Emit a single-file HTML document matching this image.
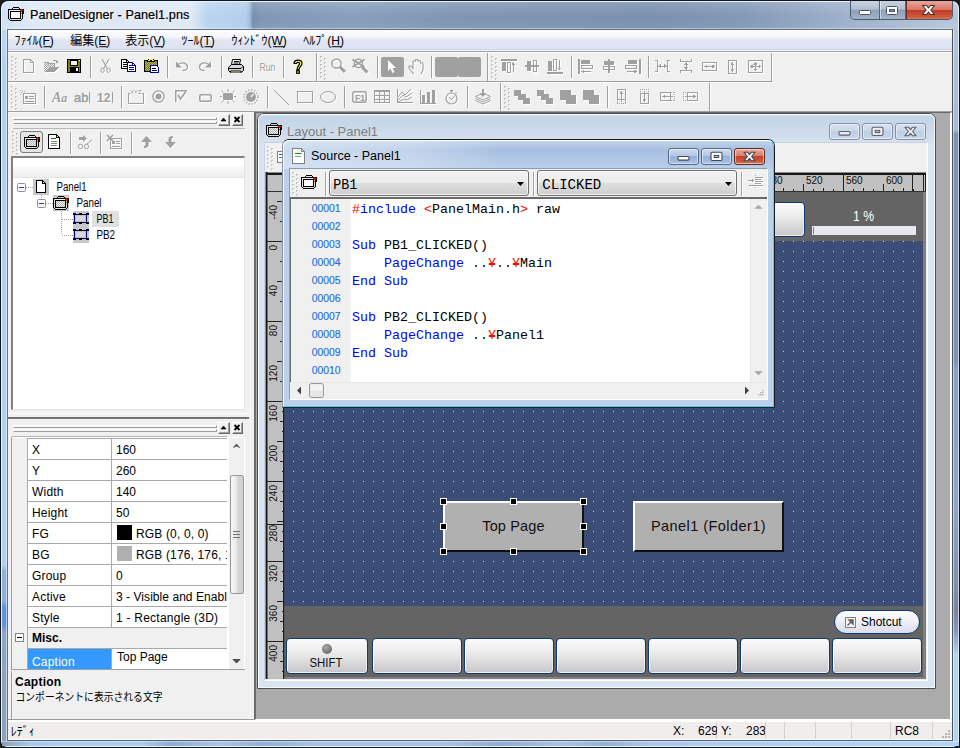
<!DOCTYPE html>
<html><head><meta charset="utf-8"><title>PanelDesigner - Panel1.pns</title>
<style>
*{margin:0;padding:0;box-sizing:border-box}
html,body{width:960px;height:748px;overflow:hidden;background:#1c1c1c}
body{position:relative;font-family:"Liberation Sans",sans-serif;font-size:12px;color:#000}
div,svg,span.a{position:absolute}
svg{overflow:visible}
.t{white-space:nowrap;line-height:1}
.ce{shape-rendering:crispEdges}
</style></head>
<body>
<div style="left:0px;top:0px;width:960px;height:748px;border-radius:7px 7px 7px 7px;background:#10161e;"></div>
<div style="left:1px;top:1px;width:958px;height:746px;border-radius:7px 7px 6px 6px;background:#eaf4fe;"></div>
<div style="left:2px;top:30px;width:5px;height:716px;background:linear-gradient(180deg,#bcd8f6 0,#aed1f4 40px,#aed1f4 535px,#8fb2d9 541px,#8fb2d9 570px,#5e92da 578px,#5e92da 594px,#8aa6c8 602px,#8c9fb8 716px);"></div>
<div style="left:6px;top:30px;width:1px;height:712px;background:rgba(255,255,255,.55);"></div>
<div style="left:953px;top:30px;width:6px;height:716px;background:linear-gradient(180deg,#b4c4d9 0,#a6b9d2 100px,#7b93b0 104px,#7b93b0 330px,#8aa2c2 340px,#8ea6c6 470px,#7d8fab 560px,#7a819d 580px,#8296b8 600px,#b1d3f8 625px,#b1d3f8 716px);"></div>
<div style="left:953px;top:30px;width:1px;height:712px;background:rgba(255,255,255,.5);"></div>
<div style="left:958px;top:30px;width:1px;height:712px;background:rgba(255,255,255,.65);"></div>
<div style="left:2px;top:741px;width:956px;height:5px;background:linear-gradient(90deg,#8c9fb8 0,#a9cbf0 30px,#aacdf2 140px,#8daacf 170px,#a6c7ec 215px,#93b0d6 260px,#a5c5e8 320px,#a5c5e8 440px,#8fadd3 500px,#a5c5e8 560px,#93b1d6 605px,#a9caee 650px,#b1d3f8 900px,#b1d3f8 958px);border-radius:0 0 5px 5px;border-top:1px solid rgba(255,255,255,.45);"></div>
<div style="left:2px;top:2px;width:956px;height:28px;border-radius:6px 6px 0 0;background:linear-gradient(90deg,#cfe0f4 0px,#dde8f5 28px,#dde8f5 190px,#bad4ef 205px,#b1ceec 244px,#9fb9d8 248px,#748cae 251px,#7f96b5 258px,#889ebc 350px,#7f95b3 450px,#7a90af 650px,#8298b6 740px,#9fb2cb 850px,#b6c6da 950px);"></div>
<div style="left:2px;top:2px;width:956px;height:28px;border-radius:6px 6px 0 0;background:linear-gradient(180deg,rgba(255,255,255,.16) 0,rgba(255,255,255,.03) 40%,rgba(255,255,255,0) 60%,rgba(255,255,255,.06) 100%);"></div>
<div style="left:7px;top:29px;width:946px;height:712px;border:1px solid #5f6f84;border-right-color:#475560;border-bottom-color:#4f5f72;"></div>
<div style="left:8px;top:28px;width:944px;height:1px;background:rgba(255,255,255,.4);"></div>
<div style="left:8px;top:30px;width:944px;height:710px;background:#f0f0f0;"></div>
<svg style="left:8px;top:7px" width="18" height="18" viewBox="0 0 18 18" ><g transform="translate(0,0)" shape-rendering="crispEdges" ><rect x="5" y="0" width="6" height="1" fill="#000"/><rect x="4" y="1" width="1" height="2" fill="#000"/><rect x="11" y="1" width="1" height="2" fill="#000"/><rect x="0" y="2" width="16" height="1" fill="#000"/><rect x="0" y="3" width="1" height="9" fill="#000"/><rect x="15" y="3" width="1" height="4" fill="#000"/><rect x="14" y="3" width="1" height="9" fill="#000"/><rect x="1" y="12" width="1" height="1" fill="#000"/><rect x="13" y="12" width="1" height="1" fill="#000"/><rect x="2" y="13" width="11" height="1" fill="#000"/><rect x="1" y="3" width="13" height="9" fill="#e0e0e0"/><rect x="2" y="12" width="11" height="1" fill="#e0e0e0"/><rect x="2" y="3" width="10" height="1" fill="#f4f4f4"/><rect x="2" y="4" width="11" height="1" fill="#000"/><rect x="2" y="11" width="11" height="1" fill="#000"/><rect x="2" y="4" width="1" height="8" fill="#000"/><rect x="12" y="4" width="1" height="8" fill="#000"/><rect x="3" y="5" width="9" height="6" fill="#fff"/><rect x="13" y="2" width="1" height="3" fill="#ff0000"/><rect x="12" y="3" width="3" height="1" fill="#ff0000"/><rect x="13" y="5" width="1" height="1" fill="#e8e800"/><rect x="13" y="6" width="1" height="1" fill="#00d000"/></g></svg>
<div class="t" style="left:30px;top:9px;font-size:12.6px;letter-spacing:0.1px;-webkit-text-stroke:0.2px #000;text-shadow:0 0 6px #fff,0 0 9px #fff;">PanelDesigner - Panel1.pns</div>
<div style="left:850px;top:1px;width:103px;height:19px;border-radius:0 0 5px 5px;border:1px solid #4d5b70;border-top:none;background:linear-gradient(180deg,#c9d3e0 0,#b3c0d2 45%,#8d9fb8 50%,#a3b3c8 100%);overflow:hidden"><div style="left:28px;top:0px;width:1px;height:19px;background:#56647a;"></div><div style="left:29px;top:0px;width:1px;height:19px;background:rgba(255,255,255,.5)"></div><div style="left:54px;top:0px;width:1px;height:19px;background:#56647a;"></div><div style="left:55px;top:0px;width:1px;height:19px;background:rgba(255,255,255,.5)"></div><div style="left:55px;top:0px;width:48px;height:19px;background:linear-gradient(180deg,#e8a596 0,#d9786a 45%,#c33c26 50%,#cf5a3e 85%,#dd8a66 100%);border-left:1px solid #6b2a24"></div></div>
<svg style="left:850px;top:1px" width="103" height="19" viewBox="0 0 103 19" ><rect x="9.5" y="9.5" width="11" height="4" rx="1" fill="#fff" stroke="#4a5568"/><rect x="36.5" y="5.5" width="11" height="8" rx="1" fill="#fff" stroke="#4a5568"/><rect x="39.5" y="8.5" width="5" height="2" fill="#8a98ae" stroke="#4a5568"/><path d="M72.5 4.5H76.5L78.5 6.8L80.5 4.5H84.5L80.8 9L84.5 13.5H80.5L78.5 11.2L76.5 13.5H72.5L76.2 9Z" fill="#fff" stroke="#4a2a2a" stroke-width="1.1" stroke-linejoin="round"/></svg>
<div style="left:8px;top:30px;width:944px;height:20px;background:linear-gradient(180deg,#fdfdfe 0,#f3f5fa 35%,#e3e7f4 50%,#dde2f2 85%,#e6e9f5 100%);"></div>
<div style="left:8px;top:49px;width:944px;height:1px;background:#cfd5e6;"></div>
<div style="left:8px;top:50px;width:944px;height:1px;background:#f4f4f6;"></div>
<div style="left:8px;top:51px;width:944px;height:1px;background:#a0a0a0;"></div>
<div style="left:8px;top:52px;width:944px;height:1px;background:#fff;"></div>
<svg style="left:14px;top:32px" width="44" height="18" viewBox="0 -13 44 18"><text x="0.5" y="0" font-family="'Liberation Sans','Noto Sans CJK JP',sans-serif" font-size="12" fill="#000">ﾌｧｲﾙ(F)</text><rect x="29.5" y="1.2" width="7.2" height="1" fill="#000"/></svg>
<svg style="left:70px;top:32px" width="44" height="18" viewBox="0 -13 44 18"><text x="0.3" y="0" font-family="'Liberation Sans','Noto Sans CJK JP',sans-serif" font-size="12" fill="#000">編集(E)</text><rect x="29.3" y="1.2" width="7.5" height="1" fill="#000"/></svg>
<svg style="left:125px;top:32px" width="44" height="18" viewBox="0 -13 44 18"><text x="0.3" y="0" font-family="'Liberation Sans','Noto Sans CJK JP',sans-serif" font-size="12" fill="#000">表示(V)</text><rect x="29.3" y="1.2" width="8.0" height="1" fill="#000"/></svg>
<svg style="left:181px;top:32px" width="38" height="18" viewBox="0 -13 38 18"><text x="0.5" y="0" font-family="'Liberation Sans','Noto Sans CJK JP',sans-serif" font-size="12" fill="#000">ﾂｰﾙ(T)</text><rect x="23.5" y="1.2" width="7.7" height="1" fill="#000"/></svg>
<svg style="left:231px;top:32px" width="60" height="18" viewBox="0 -13 60 18"><text x="0.5" y="0" font-family="'Liberation Sans','Noto Sans CJK JP',sans-serif" font-size="12" fill="#000">ｳｨﾝﾄﾞｳ(W)</text><rect x="42.1" y="1.2" width="11.7" height="1" fill="#000"/></svg>
<svg style="left:303px;top:32px" width="45" height="18" viewBox="0 -13 45 18"><text x="0.3" y="0" font-family="'Liberation Sans','Noto Sans CJK JP',sans-serif" font-size="12" fill="#000">ﾍﾙﾌﾟ(H)</text><rect x="28.7" y="1.2" width="9.2" height="1" fill="#000"/></svg>
<div style="left:8px;top:81px;width:764px;height:1px;background:#a0a0a0;"></div>
<div style="left:8px;top:82px;width:764px;height:1px;background:#fff;"></div>
<div style="left:8px;top:111px;width:944px;height:1px;background:#a0a0a0;"></div>
<svg style="left:0;top:0" width="960" height="120" viewBox="0 0 960 120"><g shape-rendering="crispEdges"><rect x="11" y="56" width="2" height="2" fill="#c2c2c2"/><rect x="12" y="57" width="1" height="1" fill="#fff"/><rect x="15" y="58" width="2" height="2" fill="#c2c2c2"/><rect x="16" y="59" width="1" height="1" fill="#fff"/><rect x="11" y="60" width="2" height="2" fill="#c2c2c2"/><rect x="12" y="61" width="1" height="1" fill="#fff"/><rect x="15" y="62" width="2" height="2" fill="#c2c2c2"/><rect x="16" y="63" width="1" height="1" fill="#fff"/><rect x="11" y="64" width="2" height="2" fill="#c2c2c2"/><rect x="12" y="65" width="1" height="1" fill="#fff"/><rect x="15" y="66" width="2" height="2" fill="#c2c2c2"/><rect x="16" y="67" width="1" height="1" fill="#fff"/><rect x="11" y="68" width="2" height="2" fill="#c2c2c2"/><rect x="12" y="69" width="1" height="1" fill="#fff"/><rect x="15" y="70" width="2" height="2" fill="#c2c2c2"/><rect x="16" y="71" width="1" height="1" fill="#fff"/><rect x="11" y="72" width="2" height="2" fill="#c2c2c2"/><rect x="12" y="73" width="1" height="1" fill="#fff"/><rect x="15" y="74" width="2" height="2" fill="#c2c2c2"/><rect x="16" y="75" width="1" height="1" fill="#fff"/><rect x="11" y="76" width="2" height="2" fill="#c2c2c2"/><rect x="12" y="77" width="1" height="1" fill="#fff"/><rect x="15" y="78" width="2" height="2" fill="#c2c2c2"/><rect x="16" y="79" width="1" height="1" fill="#fff"/></g><g transform="translate(23,59)" shape-rendering="crispEdges" ><g transform="translate(1,1)" fill="#ffffff" stroke="#ffffff"><path d="M0.5 0.5H7.5L10.5 3.5V13.5H0.5Z" fill="none" stroke-width="1"/><path d="M7.5 0.5V3.5H10.5" fill="none" stroke-width="1"/></g><g fill="#a0a0a0" stroke="#a0a0a0"><path d="M0.5 0.5H7.5L10.5 3.5V13.5H0.5Z" fill="none" stroke-width="1"/><path d="M7.5 0.5V3.5H10.5" fill="none" stroke-width="1"/></g></g><g transform="translate(44,59)" shape-rendering="crispEdges" ><g transform="translate(1,1)"><path d="M0 13H11L15 8H5Z" fill="#ffffff" stroke="none"/></g><pattern id="p1" width="2" height="2" patternUnits="userSpaceOnUse"><rect width="2" height="2" fill="#a0a0a0"/><rect width="1" height="1" fill="#f0f0f0"/><rect x="1" y="1" width="1" height="1" fill="#f0f0f0"/></pattern><rect x="0" y="4" width="10" height="9" fill="url(#p1)"/><path d="M0 13H11L15 8H5Z" fill="#a0a0a0"/><path d="M0 4V3H4V4H10V8" fill="none" stroke="#a0a0a0"/><path d="M8.5 2.5C10 0.5 12.5 0.5 13.5 3.5M13.5 3.5V1.5M13.5 3.5H11.5" fill="none" stroke="#a0a0a0"/></g><g transform="translate(67,59)" shape-rendering="crispEdges" ><rect x="0" y="0" width="14" height="14" fill="#000"/><rect x="1" y="1" width="12" height="12" fill="#808000"/><rect x="3" y="1" width="8" height="6" fill="#fff"/><rect x="3" y="1" width="8" height="1" fill="#000"/><rect x="3" y="1" width="1" height="6" fill="#000"/><rect x="10" y="1" width="1" height="6" fill="#000"/><rect x="3" y="6" width="8" height="1" fill="#000"/><rect x="4" y="2" width="6" height="4" fill="#f0f0f0"/><rect x="3" y="8" width="9" height="5" fill="#000"/><rect x="9" y="9" width="2" height="3" fill="#fff"/><rect x="12" y="1" width="1" height="1" fill="#fff"/></g><g shape-rendering="crispEdges"><rect x="90" y="56" width="1" height="22" fill="#a0a0a0"/><rect x="91" y="56" width="1" height="22" fill="#ffffff"/></g><g transform="translate(100.5,59)"><g transform="translate(1,1)" fill="#ffffff" stroke="#ffffff"><path d="M1.5 0L6.8 9.5M8.5 0L3.2 9.5" fill="none" stroke-width="1.1"/><ellipse cx="2" cy="11.3" rx="1.7" ry="2.2" fill="none"/><ellipse cx="8" cy="11.3" rx="1.7" ry="2.2" fill="none"/></g><g fill="#a0a0a0" stroke="#a0a0a0"><path d="M1.5 0L6.8 9.5M8.5 0L3.2 9.5" fill="none" stroke-width="1.1"/><ellipse cx="2" cy="11.3" rx="1.7" ry="2.2" fill="none"/><ellipse cx="8" cy="11.3" rx="1.7" ry="2.2" fill="none"/></g></g><g transform="translate(121,59)" shape-rendering="crispEdges" ><path d="M0.5 0.5H5.5L8.5 3.5V9.5H0.5Z" fill="#fff" stroke="#000"/><path d="M5.5 0.5V3.5H8.5" fill="none" stroke="#000"/><rect x="2" y="3" width="3" height="1" fill="#000"/><rect x="2" y="5" width="5" height="1" fill="#000"/><rect x="2" y="7" width="5" height="1" fill="#000"/><path d="M6.5 3.5H11.5L14.5 6.5V12.5H6.5Z" fill="#fff" stroke="#000080"/><path d="M11.5 3.5V6.5H14.5" fill="none" stroke="#000080"/><rect x="8" y="6" width="3" height="1" fill="#000080"/><rect x="8" y="8" width="5" height="1" fill="#000080"/><rect x="8" y="10" width="5" height="1" fill="#000080"/></g><g transform="translate(144,59)" shape-rendering="crispEdges" ><rect x="0" y="1" width="14" height="12" fill="#000"/><pattern id="p2" width="2" height="2" patternUnits="userSpaceOnUse"><rect width="2" height="2" fill="#b0b070"/><rect width="1" height="1" fill="#808000"/><rect x="1" y="1" width="1" height="1" fill="#808000"/></pattern><rect x="1" y="2" width="12" height="10" fill="url(#p2)"/><rect x="4" y="0" width="6" height="1" fill="#000"/><rect x="3" y="1" width="8" height="2" fill="#000"/><rect x="5" y="0" width="4" height="1" fill="#ffff00"/><rect x="4" y="1" width="6" height="1" fill="#ffff00"/><rect x="6" y="1" width="2" height="1" fill="#000"/><path d="M6.5 6.5H12.5L14.5 8.5V13.5H6.5Z" fill="#fff" stroke="#000080"/><rect x="8" y="9" width="4" height="1" fill="#000080"/><rect x="8" y="11" width="5" height="1" fill="#000080"/></g><g shape-rendering="crispEdges"><rect x="167" y="56" width="1" height="22" fill="#a0a0a0"/><rect x="168" y="56" width="1" height="22" fill="#ffffff"/></g><g transform="translate(176,60)"><g transform="translate(1,1)" fill="#ffffff" stroke="#ffffff"><path d="M2 4.5C6 1.5 11.5 3 11.5 7C11.5 10 8 10.5 6.5 10.5" fill="none" stroke-width="1.3"/><path d="M0 1.5L0 7.5L6 7.5Z" stroke="none"/></g><g fill="#a0a0a0" stroke="#a0a0a0"><path d="M2 4.5C6 1.5 11.5 3 11.5 7C11.5 10 8 10.5 6.5 10.5" fill="none" stroke-width="1.3"/><path d="M0 1.5L0 7.5L6 7.5Z" stroke="none"/></g></g><g transform="translate(199,60)"><g transform="translate(1,1)" fill="#ffffff" stroke="#ffffff"><path d="M10 4.5C6 1.5 0.5 3 0.5 7C0.5 10 4 10.5 5.5 10.5" fill="none" stroke-width="1.3"/><path d="M12 1.5L12 7.5L6 7.5Z" stroke="none"/></g><g fill="#a0a0a0" stroke="#a0a0a0"><path d="M10 4.5C6 1.5 0.5 3 0.5 7C0.5 10 4 10.5 5.5 10.5" fill="none" stroke-width="1.3"/><path d="M12 1.5L12 7.5L6 7.5Z" stroke="none"/></g></g><g shape-rendering="crispEdges"><rect x="221" y="56" width="1" height="22" fill="#a0a0a0"/><rect x="222" y="56" width="1" height="22" fill="#ffffff"/></g><g transform="translate(228,59)"><path d="M4.5 0.5H12.5L11.5 5.5H3.5Z" fill="#fff" stroke="#000"/><path d="M6 2.5H11M5.5 4H10.5" stroke="#000" fill="none"/><path d="M0.5 8.5L3.5 5.5H13.5L15.5 7.5V11.5L13 13.5H2.5L0.5 11.5Z" fill="#d8d8d8" stroke="#000"/><path d="M1 9.5H13L15 7.5" stroke="#000" fill="none"/><rect x="7" y="10" width="3" height="1" fill="#e8e000"/><path d="M2.5 13.5V12H13V13.5" stroke="#000" fill="#fff"/></g><g shape-rendering="crispEdges"><rect x="252" y="56" width="1" height="22" fill="#a0a0a0"/><rect x="253" y="56" width="1" height="22" fill="#ffffff"/></g><g shape-rendering="crispEdges"><rect x="283" y="56" width="1" height="22" fill="#a0a0a0"/><rect x="284" y="56" width="1" height="22" fill="#ffffff"/></g><g transform="translate(293,59.5)"><path d="M1 4C1 -0.5 9 -0.5 9 4C9 7 6 7 6 10H4C4 6.5 6.5 6 6.5 4C6.5 2.5 3.5 2.5 3.5 4Z" fill="#ffff00" stroke="#000" stroke-width="1.2" stroke-linejoin="round"/><rect x="3.7" y="11.2" width="2.6" height="2.6" fill="#ffff00" stroke="#000" stroke-width="1.2"/></g><g shape-rendering="crispEdges"><rect x="316" y="53" width="1" height="28" fill="#a0a0a0"/><rect x="317" y="53" width="1" height="28" fill="#ffffff"/></g><g shape-rendering="crispEdges"><rect x="320" y="56" width="2" height="2" fill="#c2c2c2"/><rect x="321" y="57" width="1" height="1" fill="#fff"/><rect x="324" y="58" width="2" height="2" fill="#c2c2c2"/><rect x="325" y="59" width="1" height="1" fill="#fff"/><rect x="320" y="60" width="2" height="2" fill="#c2c2c2"/><rect x="321" y="61" width="1" height="1" fill="#fff"/><rect x="324" y="62" width="2" height="2" fill="#c2c2c2"/><rect x="325" y="63" width="1" height="1" fill="#fff"/><rect x="320" y="64" width="2" height="2" fill="#c2c2c2"/><rect x="321" y="65" width="1" height="1" fill="#fff"/><rect x="324" y="66" width="2" height="2" fill="#c2c2c2"/><rect x="325" y="67" width="1" height="1" fill="#fff"/><rect x="320" y="68" width="2" height="2" fill="#c2c2c2"/><rect x="321" y="69" width="1" height="1" fill="#fff"/><rect x="324" y="70" width="2" height="2" fill="#c2c2c2"/><rect x="325" y="71" width="1" height="1" fill="#fff"/><rect x="320" y="72" width="2" height="2" fill="#c2c2c2"/><rect x="321" y="73" width="1" height="1" fill="#fff"/><rect x="324" y="74" width="2" height="2" fill="#c2c2c2"/><rect x="325" y="75" width="1" height="1" fill="#fff"/><rect x="320" y="76" width="2" height="2" fill="#c2c2c2"/><rect x="321" y="77" width="1" height="1" fill="#fff"/><rect x="324" y="78" width="2" height="2" fill="#c2c2c2"/><rect x="325" y="79" width="1" height="1" fill="#fff"/></g><g transform="translate(331,58)"><g transform="translate(1,1)" fill="none" stroke="#ffffff"><circle cx="5.5" cy="5.5" r="4.6" fill="none" stroke-width="1.5"/><path d="M9 9L14 14" fill="none" stroke-width="3"/></g><g fill="none" stroke="#a0a0a0"><circle cx="5.5" cy="5.5" r="4.6" fill="none" stroke-width="1.5"/><path d="M9 9L14 14" fill="none" stroke-width="3"/></g></g><g transform="translate(352,58)"><g transform="translate(1,1)" fill="none" stroke="#ffffff"><circle cx="6.5" cy="5.5" r="4.2" fill="none" stroke-width="1.5"/><path d="M10 9L15.5 14.5" fill="none" stroke-width="3"/><path d="M0.5 1.5L12.5 9M12.5 1.5L0.5 9" fill="none" stroke-width="2"/></g><g fill="none" stroke="#a0a0a0"><circle cx="6.5" cy="5.5" r="4.2" fill="none" stroke-width="1.5"/><path d="M10 9L15.5 14.5" fill="none" stroke-width="3"/><path d="M0.5 1.5L12.5 9M12.5 1.5L0.5 9" fill="none" stroke-width="2"/></g></g><g shape-rendering="crispEdges"><rect x="377" y="56" width="1" height="22" fill="#a0a0a0"/><rect x="378" y="56" width="1" height="22" fill="#ffffff"/></g><rect x="381" y="57" width="23" height="20" rx="2" fill="#a0a0a0"/><g transform="translate(388,60)"><path d="M0 0V11L2.5 8.5L4.5 13L6.5 12L4.5 8H8Z" fill="#fff"/></g><g transform="translate(408,59)"><g transform="translate(1,1)" fill="none" stroke="#ffffff"><g transform="scale(1.25,1.1)"><path d="M4.5 13.5C2 10 0.5 8 0.5 7C1.5 5.5 3 7 4 8.5V2.5C4 1 6 1 6 2.5V1.5C6 0 8 0 8 1.5V2.5C8 1 10 1 10 2.5V4C10 3 12 3 12 4.5V9C12 11 11 12 10.5 13.5" fill="none" stroke-width="0.9"/></g></g><g fill="none" stroke="#a0a0a0"><g transform="scale(1.25,1.1)"><path d="M4.5 13.5C2 10 0.5 8 0.5 7C1.5 5.5 3 7 4 8.5V2.5C4 1 6 1 6 2.5V1.5C6 0 8 0 8 1.5V2.5C8 1 10 1 10 2.5V4C10 3 12 3 12 4.5V9C12 11 11 12 10.5 13.5" fill="none" stroke-width="0.9"/></g></g></g><g shape-rendering="crispEdges"><rect x="431" y="56" width="1" height="22" fill="#a0a0a0"/><rect x="432" y="56" width="1" height="22" fill="#ffffff"/></g><rect x="435" y="57" width="23" height="20" rx="2" fill="#a0a0a0"/><rect x="458" y="57" width="23" height="20" rx="2" fill="#a0a0a0"/><g shape-rendering="crispEdges"><rect x="487" y="53" width="1" height="28" fill="#a0a0a0"/><rect x="488" y="53" width="1" height="28" fill="#ffffff"/></g><g shape-rendering="crispEdges"><rect x="491" y="56" width="2" height="2" fill="#c2c2c2"/><rect x="492" y="57" width="1" height="1" fill="#fff"/><rect x="495" y="58" width="2" height="2" fill="#c2c2c2"/><rect x="496" y="59" width="1" height="1" fill="#fff"/><rect x="491" y="60" width="2" height="2" fill="#c2c2c2"/><rect x="492" y="61" width="1" height="1" fill="#fff"/><rect x="495" y="62" width="2" height="2" fill="#c2c2c2"/><rect x="496" y="63" width="1" height="1" fill="#fff"/><rect x="491" y="64" width="2" height="2" fill="#c2c2c2"/><rect x="492" y="65" width="1" height="1" fill="#fff"/><rect x="495" y="66" width="2" height="2" fill="#c2c2c2"/><rect x="496" y="67" width="1" height="1" fill="#fff"/><rect x="491" y="68" width="2" height="2" fill="#c2c2c2"/><rect x="492" y="69" width="1" height="1" fill="#fff"/><rect x="495" y="70" width="2" height="2" fill="#c2c2c2"/><rect x="496" y="71" width="1" height="1" fill="#fff"/><rect x="491" y="72" width="2" height="2" fill="#c2c2c2"/><rect x="492" y="73" width="1" height="1" fill="#fff"/><rect x="495" y="74" width="2" height="2" fill="#c2c2c2"/><rect x="496" y="75" width="1" height="1" fill="#fff"/><rect x="491" y="76" width="2" height="2" fill="#c2c2c2"/><rect x="492" y="77" width="1" height="1" fill="#fff"/><rect x="495" y="78" width="2" height="2" fill="#c2c2c2"/><rect x="496" y="79" width="1" height="1" fill="#fff"/></g><g transform="translate(501,59)" shape-rendering="crispEdges" ><g transform="translate(1,1)" fill="#ffffff" stroke="#ffffff"><rect x="0" y="0" width="16" height="2" stroke="none"/><rect x="1" y="3" width="4" height="9" stroke="none"/><rect x="6.5" y="3.5" width="3" height="10" fill="none"/><path d="M12.5 4L12.5 13" fill="none" stroke-width="1"/><path d="M10.5 6L12.5 3L14.5 6Z" stroke="none"/></g><g fill="#a0a0a0" stroke="#a0a0a0"><rect x="0" y="0" width="16" height="2" stroke="none"/><rect x="1" y="3" width="4" height="9" stroke="none"/><rect x="6.5" y="3.5" width="3" height="10" fill="none"/><path d="M12.5 4L12.5 13" fill="none" stroke-width="1"/><path d="M10.5 6L12.5 3L14.5 6Z" stroke="none"/></g></g><g transform="translate(525,59)" shape-rendering="crispEdges" ><g transform="translate(1,1)" fill="#ffffff" stroke="#ffffff"><rect x="0" y="6" width="14" height="1.5" stroke="none"/><rect x="2" y="2" width="4" height="10" stroke="none"/><rect x="8.5" y="1.5" width="3" height="11" fill="none"/></g><g fill="#a0a0a0" stroke="#a0a0a0"><rect x="0" y="6" width="14" height="1.5" stroke="none"/><rect x="2" y="2" width="4" height="10" stroke="none"/><rect x="8.5" y="1.5" width="3" height="11" fill="none"/></g></g><g transform="translate(547,59)" shape-rendering="crispEdges" ><g transform="translate(1,1)" fill="#ffffff" stroke="#ffffff"><rect x="0" y="13" width="16" height="2" stroke="none"/><rect x="1" y="2" width="4" height="10" stroke="none"/><rect x="6.5" y="0.5" width="3" height="11" fill="none"/><path d="M12.5 1L12.5 10" fill="none" stroke-width="1"/><path d="M10.5 8.5L12.5 11.5L14.5 8.5Z" stroke="none"/></g><g fill="#a0a0a0" stroke="#a0a0a0"><rect x="0" y="13" width="16" height="2" stroke="none"/><rect x="1" y="2" width="4" height="10" stroke="none"/><rect x="6.5" y="0.5" width="3" height="11" fill="none"/><path d="M12.5 1L12.5 10" fill="none" stroke-width="1"/><path d="M10.5 8.5L12.5 11.5L14.5 8.5Z" stroke="none"/></g></g><g shape-rendering="crispEdges"><rect x="571" y="56" width="1" height="22" fill="#a0a0a0"/><rect x="572" y="56" width="1" height="22" fill="#ffffff"/></g><g transform="translate(578,59)" shape-rendering="crispEdges" ><g transform="translate(1,1)" fill="#ffffff" stroke="#ffffff"><rect x="0" y="0" width="2" height="15" stroke="none"/><rect x="3" y="1" width="9" height="4" stroke="none"/><rect x="3.5" y="6.5" width="11" height="3" fill="none"/><path d="M4 12.5L13 12.5" fill="none" stroke-width="1"/><path d="M6 10.5L3 12.5L6 14.5Z" stroke="none"/></g><g fill="#a0a0a0" stroke="#a0a0a0"><rect x="0" y="0" width="2" height="15" stroke="none"/><rect x="3" y="1" width="9" height="4" stroke="none"/><rect x="3.5" y="6.5" width="11" height="3" fill="none"/><path d="M4 12.5L13 12.5" fill="none" stroke-width="1"/><path d="M6 10.5L3 12.5L6 14.5Z" stroke="none"/></g></g><g transform="translate(603,59)" shape-rendering="crispEdges" ><g transform="translate(1,1)" fill="#ffffff" stroke="#ffffff"><rect x="5.3" y="0" width="1.5" height="14" stroke="none"/><rect x="1" y="2" width="10" height="4" stroke="none"/><rect x="0.5" y="7.5" width="11" height="3" fill="none"/></g><g fill="#a0a0a0" stroke="#a0a0a0"><rect x="5.3" y="0" width="1.5" height="14" stroke="none"/><rect x="1" y="2" width="10" height="4" stroke="none"/><rect x="0.5" y="7.5" width="11" height="3" fill="none"/></g></g><g transform="translate(625,59)" shape-rendering="crispEdges" ><g transform="translate(1,1)" fill="#ffffff" stroke="#ffffff"><rect x="14" y="0" width="2" height="15" stroke="none"/><rect x="3" y="1" width="9" height="4" stroke="none"/><rect x="0.5" y="6.5" width="11" height="3" fill="none"/><path d="M2 12.5L11 12.5" fill="none" stroke-width="1"/><path d="M9 10.5L12 12.5L9 14.5Z" stroke="none"/></g><g fill="#a0a0a0" stroke="#a0a0a0"><rect x="14" y="0" width="2" height="15" stroke="none"/><rect x="3" y="1" width="9" height="4" stroke="none"/><rect x="0.5" y="6.5" width="11" height="3" fill="none"/><path d="M2 12.5L11 12.5" fill="none" stroke-width="1"/><path d="M9 10.5L12 12.5L9 14.5Z" stroke="none"/></g></g><g shape-rendering="crispEdges"><rect x="648" y="56" width="1" height="22" fill="#a0a0a0"/><rect x="649" y="56" width="1" height="22" fill="#ffffff"/></g><g transform="translate(655,60)" shape-rendering="crispEdges" ><g transform="translate(1,1)" fill="#ffffff" stroke="#ffffff"><path d="M0 0.5H2.5V11.5H0" fill="none" stroke-width="1"/><path d="M15 0.5H12.5V11.5H15" fill="none" stroke-width="1"/><path d="M3 6L12 6" fill="none" stroke-width="1"/><path d="M6 4L3 6L6 8Z" stroke="none"/><path d="M9 4L12 6L9 8Z" stroke="none"/></g><g fill="#a0a0a0" stroke="#a0a0a0"><path d="M0 0.5H2.5V11.5H0" fill="none" stroke-width="1"/><path d="M15 0.5H12.5V11.5H15" fill="none" stroke-width="1"/><path d="M3 6L12 6" fill="none" stroke-width="1"/><path d="M6 4L3 6L6 8Z" stroke="none"/><path d="M9 4L12 6L9 8Z" stroke="none"/></g></g><g transform="translate(680,59)" shape-rendering="crispEdges" ><g transform="translate(1,1)" fill="#ffffff" stroke="#ffffff"><path d="M0.5 0V2.5H11.5V0" fill="none" stroke-width="1"/><path d="M0.5 14V11.5H11.5V14" fill="none" stroke-width="1"/><path d="M6 3L6 11" fill="none" stroke-width="1"/><path d="M4 6L6 3L8 6Z" stroke="none"/><path d="M4 8L6 11L8 8Z" stroke="none"/></g><g fill="#a0a0a0" stroke="#a0a0a0"><path d="M0.5 0V2.5H11.5V0" fill="none" stroke-width="1"/><path d="M0.5 14V11.5H11.5V14" fill="none" stroke-width="1"/><path d="M6 3L6 11" fill="none" stroke-width="1"/><path d="M4 6L6 3L8 6Z" stroke="none"/><path d="M4 8L6 11L8 8Z" stroke="none"/></g></g><g transform="translate(702,62)" shape-rendering="crispEdges" ><g transform="translate(1,1)" fill="#ffffff" stroke="#ffffff"><rect x="0.5" y="0.5" width="14" height="8" fill="none"/><path d="M2 4.5L13 4.5" fill="none" stroke-width="1"/><path d="M5 2.5L2 4.5L5 6.5Z" stroke="none"/><path d="M10 2.5L13 4.5L10 6.5Z" stroke="none"/></g><g fill="#a0a0a0" stroke="#a0a0a0"><rect x="0.5" y="0.5" width="14" height="8" fill="none"/><path d="M2 4.5L13 4.5" fill="none" stroke-width="1"/><path d="M5 2.5L2 4.5L5 6.5Z" stroke="none"/><path d="M10 2.5L13 4.5L10 6.5Z" stroke="none"/></g></g><g transform="translate(728,60)" shape-rendering="crispEdges" ><g transform="translate(1,1)" fill="#ffffff" stroke="#ffffff"><rect x="0.5" y="0.5" width="8" height="13" fill="none"/><path d="M4.5 2L4.5 12" fill="none" stroke-width="1"/><path d="M2.5 5L4.5 2L6.5 5Z" stroke="none"/><path d="M2.5 9L4.5 12L6.5 9Z" stroke="none"/></g><g fill="#a0a0a0" stroke="#a0a0a0"><rect x="0.5" y="0.5" width="8" height="13" fill="none"/><path d="M4.5 2L4.5 12" fill="none" stroke-width="1"/><path d="M2.5 5L4.5 2L6.5 5Z" stroke="none"/><path d="M2.5 9L4.5 12L6.5 9Z" stroke="none"/></g></g><g transform="translate(748,60)" shape-rendering="crispEdges" ><g transform="translate(1,1)" fill="#ffffff" stroke="#ffffff"><rect x="0.5" y="0.5" width="14" height="12" fill="none"/><path d="M2 6.5L13 6.5" fill="none" stroke-width="1"/><path d="M7.5 2L7.5 11" fill="none" stroke-width="1"/><path d="M4.5 4.5L2 6.5L4.5 8.5Z" stroke="none"/><path d="M10.5 4.5L13 6.5L10.5 8.5Z" stroke="none"/><path d="M5.5 4.5L7.5 2L9.5 4.5Z" stroke="none"/><path d="M5.5 8.5L7.5 11L9.5 8.5Z" stroke="none"/></g><g fill="#a0a0a0" stroke="#a0a0a0"><rect x="0.5" y="0.5" width="14" height="12" fill="none"/><path d="M2 6.5L13 6.5" fill="none" stroke-width="1"/><path d="M7.5 2L7.5 11" fill="none" stroke-width="1"/><path d="M4.5 4.5L2 6.5L4.5 8.5Z" stroke="none"/><path d="M10.5 4.5L13 6.5L10.5 8.5Z" stroke="none"/><path d="M5.5 4.5L7.5 2L9.5 4.5Z" stroke="none"/><path d="M5.5 8.5L7.5 11L9.5 8.5Z" stroke="none"/></g></g><g shape-rendering="crispEdges"><rect x="771" y="53" width="1" height="28" fill="#a0a0a0"/><rect x="772" y="53" width="1" height="28" fill="#ffffff"/></g><g shape-rendering="crispEdges"><rect x="11" y="86" width="2" height="2" fill="#c2c2c2"/><rect x="12" y="87" width="1" height="1" fill="#fff"/><rect x="15" y="88" width="2" height="2" fill="#c2c2c2"/><rect x="16" y="89" width="1" height="1" fill="#fff"/><rect x="11" y="90" width="2" height="2" fill="#c2c2c2"/><rect x="12" y="91" width="1" height="1" fill="#fff"/><rect x="15" y="92" width="2" height="2" fill="#c2c2c2"/><rect x="16" y="93" width="1" height="1" fill="#fff"/><rect x="11" y="94" width="2" height="2" fill="#c2c2c2"/><rect x="12" y="95" width="1" height="1" fill="#fff"/><rect x="15" y="96" width="2" height="2" fill="#c2c2c2"/><rect x="16" y="97" width="1" height="1" fill="#fff"/><rect x="11" y="98" width="2" height="2" fill="#c2c2c2"/><rect x="12" y="99" width="1" height="1" fill="#fff"/><rect x="15" y="100" width="2" height="2" fill="#c2c2c2"/><rect x="16" y="101" width="1" height="1" fill="#fff"/><rect x="11" y="102" width="2" height="2" fill="#c2c2c2"/><rect x="12" y="103" width="1" height="1" fill="#fff"/><rect x="15" y="104" width="2" height="2" fill="#c2c2c2"/><rect x="16" y="105" width="1" height="1" fill="#fff"/><rect x="11" y="106" width="2" height="2" fill="#c2c2c2"/><rect x="12" y="107" width="1" height="1" fill="#fff"/><rect x="15" y="108" width="2" height="2" fill="#c2c2c2"/><rect x="16" y="109" width="1" height="1" fill="#fff"/></g><g transform="translate(20,90)" shape-rendering="crispEdges" ><g transform="translate(1,1)" fill="#ffffff" stroke="#ffffff"><rect x="3.5" y="3.5" width="12" height="10" fill="none"/><rect x="5" y="6" width="3" height="3" stroke="none"/><path d="M9 6.5L14 6.5" fill="none" stroke-width="1"/><path d="M9 8.5L14 8.5" fill="none" stroke-width="1"/><path d="M5 11.5L14 11.5" fill="none" stroke-width="1"/><rect x="0" y="0" width="1" height="1" stroke="none"/><rect x="2" y="1" width="1" height="1" stroke="none"/><rect x="1" y="2" width="1" height="1" stroke="none"/><rect x="0" y="4" width="1" height="1" stroke="none"/><rect x="4" y="1" width="1" height="1" stroke="none"/></g><g fill="#a0a0a0" stroke="#a0a0a0"><rect x="3.5" y="3.5" width="12" height="10" fill="none"/><rect x="5" y="6" width="3" height="3" stroke="none"/><path d="M9 6.5L14 6.5" fill="none" stroke-width="1"/><path d="M9 8.5L14 8.5" fill="none" stroke-width="1"/><path d="M5 11.5L14 11.5" fill="none" stroke-width="1"/><rect x="0" y="0" width="1" height="1" stroke="none"/><rect x="2" y="1" width="1" height="1" stroke="none"/><rect x="1" y="2" width="1" height="1" stroke="none"/><rect x="0" y="4" width="1" height="1" stroke="none"/><rect x="4" y="1" width="1" height="1" stroke="none"/></g></g><g shape-rendering="crispEdges"><rect x="44" y="86" width="1" height="22" fill="#a0a0a0"/><rect x="45" y="86" width="1" height="22" fill="#ffffff"/></g><g transform="translate(51,90)"><text x="1" y="12" font-family="Liberation Serif" font-style="italic" font-weight="bold" font-size="14" fill="#ffffff" transform="translate(1,1)">A<tspan font-size="12">a</tspan></text><text x="1" y="12" font-family="Liberation Serif" font-style="italic" font-weight="bold" font-size="14" fill="#a0a0a0">A<tspan font-size="12">a</tspan></text></g><g transform="translate(74,90)"><text x="0" y="12" font-family="Liberation Sans" font-size="13" fill="#ffffff" transform="translate(1,1)">ab</text><text x="0" y="12" font-family="Liberation Sans" font-size="13" fill="#a0a0a0" stroke="#a0a0a0" stroke-width=".5">ab</text><rect x="15" y="2" width="1" height="11" fill="#a0a0a0"/></g><g transform="translate(97,90)"><text x="0" y="12" font-family="Liberation Sans" font-size="12" font-weight="bold" fill="#ffffff" transform="translate(1,1)">12</text><text x="0" y="12" font-family="Liberation Sans" font-size="12" font-weight="bold" fill="#a0a0a0">12</text><rect x="15" y="2" width="1" height="11" fill="#a0a0a0"/></g><g shape-rendering="crispEdges"><rect x="121" y="86" width="1" height="22" fill="#a0a0a0"/><rect x="122" y="86" width="1" height="22" fill="#ffffff"/></g><g transform="translate(128,90)"><g transform="translate(1,1)" fill="#ffffff" stroke="#ffffff"><path d="M0.5 3.5V13.5H15.5V3.5" fill="none" stroke-width="1"/><path d="M0 3.5H2M14 3.5H16" fill="none" stroke-width="1"/><path d="M3 0.5L5.5 3.5M5.5 0.5L3 3.5M6.5 0.5L8 2L9.5 0.5M8 2V3.5M10.5 0.5H13L10.5 3.5H13.5" fill="none" stroke-width="0.8"/></g><g fill="#a0a0a0" stroke="#a0a0a0"><path d="M0.5 3.5V13.5H15.5V3.5" fill="none" stroke-width="1"/><path d="M0 3.5H2M14 3.5H16" fill="none" stroke-width="1"/><path d="M3 0.5L5.5 3.5M5.5 0.5L3 3.5M6.5 0.5L8 2L9.5 0.5M8 2V3.5M10.5 0.5H13L10.5 3.5H13.5" fill="none" stroke-width="0.8"/></g></g><g transform="translate(152,90)"><g transform="translate(1,1)" fill="#ffffff" stroke="#ffffff"><circle cx="6.5" cy="6.5" r="5.6" fill="none" stroke-width="1.4"/><circle cx="6.5" cy="6.5" r="3" stroke="none"/></g><g fill="#a0a0a0" stroke="#a0a0a0"><circle cx="6.5" cy="6.5" r="5.6" fill="none" stroke-width="1.4"/><circle cx="6.5" cy="6.5" r="3" stroke="none"/></g></g><g transform="translate(175,90)"><g transform="translate(1,1)" fill="#ffffff" stroke="#ffffff"><path d="M11.5 0.5H0.5V11.5" fill="none" stroke-width="1"/><path d="M0.5 0.5H11.5" fill="none" stroke-width="1"/><path d="M3 5L5.5 9L11 1.5" fill="none" stroke-width="1.6"/><rect x="0" y="0" width="12" height="1.5" stroke="none"/><rect x="0" y="0" width="1.5" height="12" stroke="none"/></g><g fill="#a0a0a0" stroke="#a0a0a0"><path d="M11.5 0.5H0.5V11.5" fill="none" stroke-width="1"/><path d="M0.5 0.5H11.5" fill="none" stroke-width="1"/><path d="M3 5L5.5 9L11 1.5" fill="none" stroke-width="1.6"/><rect x="0" y="0" width="12" height="1.5" stroke="none"/><rect x="0" y="0" width="1.5" height="12" stroke="none"/></g></g><g transform="translate(199,94)"><g transform="translate(1,1)" fill="#ffffff" stroke="#ffffff"><rect x="0.8" y="0.8" width="11.4" height="6.4" rx="1.5" fill="none" stroke-width="1.6"/></g><g fill="#a0a0a0" stroke="#a0a0a0"><rect x="0.8" y="0.8" width="11.4" height="6.4" rx="1.5" fill="none" stroke-width="1.6"/></g></g><g transform="translate(220,89)"><g transform="translate(1,1)" fill="#ffffff" stroke="#ffffff"><rect x="3" y="4" width="10" height="7" rx="1.5" stroke="none"/><path d="M8 0V3M8 12V15M0 7.5H2M14 7.5H16M1.5 1.5L3.5 3.5M14.5 1.5L12.5 3.5M1.5 13.5L3.5 11.5M14.5 13.5L12.5 11.5" fill="none" stroke-width="1"/></g><g fill="#a0a0a0" stroke="#a0a0a0"><rect x="3" y="4" width="10" height="7" rx="1.5" stroke="none"/><path d="M8 0V3M8 12V15M0 7.5H2M14 7.5H16M1.5 1.5L3.5 3.5M14.5 1.5L12.5 3.5M1.5 13.5L3.5 11.5M14.5 13.5L12.5 11.5" fill="none" stroke-width="1"/></g></g><g transform="translate(243,89)"><g transform="translate(1,1)" fill="#ffffff" stroke="#ffffff"><circle cx="8" cy="8" r="5" stroke="none"/><circle cx="8" cy="8" r="7" fill="none" stroke-dasharray="1.2 1.8" stroke-width="1.6"/></g><g fill="#a0a0a0" stroke="#a0a0a0"><circle cx="8" cy="8" r="5" stroke="none"/><circle cx="8" cy="8" r="7" fill="none" stroke-dasharray="1.2 1.8" stroke-width="1.6"/></g><path d="M8 8L10.5 5" stroke="#f0f0f0" stroke-width="1.4" fill="none"/></g><g shape-rendering="crispEdges"><rect x="267" y="86" width="1" height="22" fill="#a0a0a0"/><rect x="268" y="86" width="1" height="22" fill="#ffffff"/></g><g transform="translate(274,90)"><g transform="translate(1,1)" fill="#ffffff" stroke="#ffffff"><path d="M0 0L15 15" fill="none" stroke-width="1"/></g><g fill="#a0a0a0" stroke="#a0a0a0"><path d="M0 0L15 15" fill="none" stroke-width="1"/></g></g><g transform="translate(297,91)" shape-rendering="crispEdges" ><g transform="translate(1,1)" fill="#ffffff" stroke="#ffffff"><rect x="0.5" y="0.5" width="15" height="11" fill="none"/></g><g fill="#a0a0a0" stroke="#a0a0a0"><rect x="0.5" y="0.5" width="15" height="11" fill="none"/></g></g><g transform="translate(320,91)"><g transform="translate(1,1)" fill="#ffffff" stroke="#ffffff"><ellipse cx="8" cy="6" rx="7.5" ry="5.5" fill="none"/></g><g fill="#a0a0a0" stroke="#a0a0a0"><ellipse cx="8" cy="6" rx="7.5" ry="5.5" fill="none"/></g></g><g shape-rendering="crispEdges"><rect x="344" y="86" width="1" height="22" fill="#a0a0a0"/><rect x="345" y="86" width="1" height="22" fill="#ffffff"/></g><g transform="translate(352,91)"><g transform="translate(1,1)" fill="#ffffff" stroke="#ffffff"><rect x="0.8" y="0.8" width="13.4" height="10.4" rx="1.5" fill="none" stroke-width="1.4"/></g><g fill="#a0a0a0" stroke="#a0a0a0"><rect x="0.8" y="0.8" width="13.4" height="10.4" rx="1.5" fill="none" stroke-width="1.4"/></g><text x="3" y="9.5" font-family="Liberation Sans" font-size="8.5" font-weight="bold" fill="#a0a0a0">F1</text></g><g transform="translate(374,90)" shape-rendering="crispEdges" ><g transform="translate(1,1)" fill="#ffffff" stroke="#ffffff"><rect x="0.5" y="0.5" width="15" height="12" fill="none"/><rect x="0" y="0" width="16" height="2" stroke="none"/><path d="M0 5.5L16 5.5" fill="none" stroke-width="1"/><path d="M0 9.5L16 9.5" fill="none" stroke-width="1"/><path d="M5.5 0L5.5 13" fill="none" stroke-width="1"/><path d="M10.5 0L10.5 13" fill="none" stroke-width="1"/></g><g fill="#a0a0a0" stroke="#a0a0a0"><rect x="0.5" y="0.5" width="15" height="12" fill="none"/><rect x="0" y="0" width="16" height="2" stroke="none"/><path d="M0 5.5L16 5.5" fill="none" stroke-width="1"/><path d="M0 9.5L16 9.5" fill="none" stroke-width="1"/><path d="M5.5 0L5.5 13" fill="none" stroke-width="1"/><path d="M10.5 0L10.5 13" fill="none" stroke-width="1"/></g></g><g transform="translate(397,89)"><g transform="translate(1,1)" fill="#ffffff" stroke="#ffffff"><path d="M0.5 0V13.5H16" fill="none" stroke-width="1"/><path d="M1 8L5 3L8 6L14 0" fill="none" stroke-width="1"/><path d="M1 11L6 6L9 8L15 4" fill="none" stroke-width="1"/><path d="M1 13L7 10L10 11L15 8" fill="none" stroke-width="1"/></g><g fill="#a0a0a0" stroke="#a0a0a0"><path d="M0.5 0V13.5H16" fill="none" stroke-width="1"/><path d="M1 8L5 3L8 6L14 0" fill="none" stroke-width="1"/><path d="M1 11L6 6L9 8L15 4" fill="none" stroke-width="1"/><path d="M1 13L7 10L10 11L15 8" fill="none" stroke-width="1"/></g></g><g transform="translate(420,90)" shape-rendering="crispEdges" ><g transform="translate(1,1)" fill="#ffffff" stroke="#ffffff"><path d="M0.5 0V13.5H16" fill="none" stroke-width="1"/><rect x="2" y="5" width="3" height="8" stroke="none"/><rect x="7" y="2" width="3" height="11" stroke="none"/><rect x="12" y="0" width="3" height="13" stroke="none"/></g><g fill="#a0a0a0" stroke="#a0a0a0"><path d="M0.5 0V13.5H16" fill="none" stroke-width="1"/><rect x="2" y="5" width="3" height="8" stroke="none"/><rect x="7" y="2" width="3" height="11" stroke="none"/><rect x="12" y="0" width="3" height="13" stroke="none"/></g></g><g transform="translate(445,90)"><g transform="translate(1,1)" fill="#ffffff" stroke="#ffffff"><circle cx="6.5" cy="8.5" r="5.5" fill="none" stroke-width="1.2"/><path d="M4 7L6.5 9.5L10 5.5" fill="none" stroke-width="1"/><rect x="5" y="0" width="3" height="1.5" stroke="none"/><path d="M6.5 1L6.5 3" fill="none" stroke-width="1"/><path d="M10.5 2L12 3.5" fill="none" stroke-width="1"/></g><g fill="#a0a0a0" stroke="#a0a0a0"><circle cx="6.5" cy="8.5" r="5.5" fill="none" stroke-width="1.2"/><path d="M4 7L6.5 9.5L10 5.5" fill="none" stroke-width="1"/><rect x="5" y="0" width="3" height="1.5" stroke="none"/><path d="M6.5 1L6.5 3" fill="none" stroke-width="1"/><path d="M10.5 2L12 3.5" fill="none" stroke-width="1"/></g></g><g shape-rendering="crispEdges"><rect x="467" y="86" width="1" height="22" fill="#a0a0a0"/><rect x="468" y="86" width="1" height="22" fill="#ffffff"/></g><g transform="translate(475,89)"><g transform="translate(1,1)" fill="#ffffff" stroke="#ffffff"><path d="M0.5 7.5L8 4L15.5 7.5L8 11Z" fill="none" stroke-width="1"/><path d="M0.5 9.5L8 13L15.5 9.5" fill="none" stroke-width="1"/><path d="M0.5 11.5L8 15L15.5 11.5" fill="none" stroke-width="1"/><rect x="7" y="0" width="2" height="5" stroke="none"/><path d="M4.5 4.5H11.5L8 8Z" stroke="none"/></g><g fill="#a0a0a0" stroke="#a0a0a0"><path d="M0.5 7.5L8 4L15.5 7.5L8 11Z" fill="none" stroke-width="1"/><path d="M0.5 9.5L8 13L15.5 9.5" fill="none" stroke-width="1"/><path d="M0.5 11.5L8 15L15.5 11.5" fill="none" stroke-width="1"/><rect x="7" y="0" width="2" height="5" stroke="none"/><path d="M4.5 4.5H11.5L8 8Z" stroke="none"/></g></g><g shape-rendering="crispEdges"><rect x="500" y="83" width="1" height="28" fill="#a0a0a0"/><rect x="501" y="83" width="1" height="28" fill="#ffffff"/></g><g shape-rendering="crispEdges"><rect x="504" y="86" width="2" height="2" fill="#c2c2c2"/><rect x="505" y="87" width="1" height="1" fill="#fff"/><rect x="508" y="88" width="2" height="2" fill="#c2c2c2"/><rect x="509" y="89" width="1" height="1" fill="#fff"/><rect x="504" y="90" width="2" height="2" fill="#c2c2c2"/><rect x="505" y="91" width="1" height="1" fill="#fff"/><rect x="508" y="92" width="2" height="2" fill="#c2c2c2"/><rect x="509" y="93" width="1" height="1" fill="#fff"/><rect x="504" y="94" width="2" height="2" fill="#c2c2c2"/><rect x="505" y="95" width="1" height="1" fill="#fff"/><rect x="508" y="96" width="2" height="2" fill="#c2c2c2"/><rect x="509" y="97" width="1" height="1" fill="#fff"/><rect x="504" y="98" width="2" height="2" fill="#c2c2c2"/><rect x="505" y="99" width="1" height="1" fill="#fff"/><rect x="508" y="100" width="2" height="2" fill="#c2c2c2"/><rect x="509" y="101" width="1" height="1" fill="#fff"/><rect x="504" y="102" width="2" height="2" fill="#c2c2c2"/><rect x="505" y="103" width="1" height="1" fill="#fff"/><rect x="508" y="104" width="2" height="2" fill="#c2c2c2"/><rect x="509" y="105" width="1" height="1" fill="#fff"/><rect x="504" y="106" width="2" height="2" fill="#c2c2c2"/><rect x="505" y="107" width="1" height="1" fill="#fff"/><rect x="508" y="108" width="2" height="2" fill="#c2c2c2"/><rect x="509" y="109" width="1" height="1" fill="#fff"/></g><g transform="translate(514,90)" shape-rendering="crispEdges" ><g transform="translate(1,1)" fill="#ffffff" stroke="#ffffff"><rect x="0" y="0" width="7" height="6" stroke="none"/><rect x="4" y="4" width="8" height="6" stroke="none"/><rect x="9" y="8" width="7" height="6" stroke="none"/></g><g fill="#a0a0a0" stroke="#a0a0a0"><rect x="0" y="0" width="7" height="6" stroke="none"/><rect x="4" y="4" width="8" height="6" stroke="none"/><rect x="9" y="8" width="7" height="6" stroke="none"/></g></g><g transform="translate(537,90)" shape-rendering="crispEdges" ><g transform="translate(1,1)" fill="#ffffff" stroke="#ffffff"><rect x="0" y="0" width="7" height="6" stroke="none"/><rect x="4" y="4" width="8" height="6" stroke="none"/><rect x="9" y="8" width="7" height="6" stroke="none"/></g><g fill="#a0a0a0" stroke="#a0a0a0"><rect x="0" y="0" width="7" height="6" stroke="none"/><rect x="4" y="4" width="8" height="6" stroke="none"/><rect x="9" y="8" width="7" height="6" stroke="none"/></g></g><g transform="translate(560,90)" shape-rendering="crispEdges" ><g transform="translate(1,1)" fill="#ffffff" stroke="#ffffff"><rect x="0" y="0" width="11" height="10" stroke="none"/><rect x="6" y="5" width="10" height="9" stroke="none"/></g><g fill="#a0a0a0" stroke="#a0a0a0"><rect x="0" y="0" width="11" height="10" stroke="none"/><rect x="6" y="5" width="10" height="9" stroke="none"/></g></g><g transform="translate(583,90)" shape-rendering="crispEdges" ><g transform="translate(1,1)" fill="#ffffff" stroke="#ffffff"><rect x="0" y="0" width="11" height="10" stroke="none"/><rect x="6" y="5" width="10" height="9" stroke="none"/></g><g fill="#a0a0a0" stroke="#a0a0a0"><rect x="0" y="0" width="11" height="10" stroke="none"/><rect x="6" y="5" width="10" height="9" stroke="none"/></g></g><g shape-rendering="crispEdges"><rect x="607" y="86" width="1" height="22" fill="#a0a0a0"/><rect x="608" y="86" width="1" height="22" fill="#ffffff"/></g><g transform="translate(617,89)" shape-rendering="crispEdges" ><g transform="translate(1,1)" fill="#ffffff" stroke="#ffffff"><rect x="0.5" y="0.5" width="8" height="10" fill="none"/><path d="M0 14.5H9M0.5 11V15M8.5 11V15" fill="none" stroke-dasharray="1 1"/><path d="M4.5 3L4.5 13" fill="none" stroke-width="1"/><path d="M2.5 5L4.5 2L6.5 5Z" stroke="none"/></g><g fill="#a0a0a0" stroke="#a0a0a0"><rect x="0.5" y="0.5" width="8" height="10" fill="none"/><path d="M0 14.5H9M0.5 11V15M8.5 11V15" fill="none" stroke-dasharray="1 1"/><path d="M4.5 3L4.5 13" fill="none" stroke-width="1"/><path d="M2.5 5L4.5 2L6.5 5Z" stroke="none"/></g></g><g transform="translate(640,89)" shape-rendering="crispEdges" ><g transform="translate(1,1)" fill="#ffffff" stroke="#ffffff"><rect x="0.5" y="4.5" width="8" height="10" fill="none"/><path d="M0 0.5H9M0.5 0V4M8.5 0V4" fill="none" stroke-dasharray="1 1"/><path d="M4.5 2L4.5 12" fill="none" stroke-width="1"/><path d="M2.5 10L4.5 13L6.5 10Z" stroke="none"/></g><g fill="#a0a0a0" stroke="#a0a0a0"><rect x="0.5" y="4.5" width="8" height="10" fill="none"/><path d="M0 0.5H9M0.5 0V4M8.5 0V4" fill="none" stroke-dasharray="1 1"/><path d="M4.5 2L4.5 12" fill="none" stroke-width="1"/><path d="M2.5 10L4.5 13L6.5 10Z" stroke="none"/></g></g><g transform="translate(660,92)" shape-rendering="crispEdges" ><g transform="translate(1,1)" fill="#ffffff" stroke="#ffffff"><rect x="0.5" y="0.5" width="10" height="8" fill="none"/><path d="M14.5 0V9M11 0.5H15M11 8.5H15" fill="none" stroke-dasharray="1 1"/><path d="M3 4.5L13 4.5" fill="none" stroke-width="1"/><path d="M5 2.5L2 4.5L5 6.5Z" stroke="none"/></g><g fill="#a0a0a0" stroke="#a0a0a0"><rect x="0.5" y="0.5" width="10" height="8" fill="none"/><path d="M14.5 0V9M11 0.5H15M11 8.5H15" fill="none" stroke-dasharray="1 1"/><path d="M3 4.5L13 4.5" fill="none" stroke-width="1"/><path d="M5 2.5L2 4.5L5 6.5Z" stroke="none"/></g></g><g transform="translate(683,92)" shape-rendering="crispEdges" ><g transform="translate(1,1)" fill="#ffffff" stroke="#ffffff"><rect x="4.5" y="0.5" width="10" height="8" fill="none"/><path d="M0.5 0V9M0 0.5H4M0 8.5H4" fill="none" stroke-dasharray="1 1"/><path d="M2 4.5L12 4.5" fill="none" stroke-width="1"/><path d="M10 2.5L13 4.5L10 6.5Z" stroke="none"/></g><g fill="#a0a0a0" stroke="#a0a0a0"><rect x="4.5" y="0.5" width="10" height="8" fill="none"/><path d="M0.5 0V9M0 0.5H4M0 8.5H4" fill="none" stroke-dasharray="1 1"/><path d="M2 4.5L12 4.5" fill="none" stroke-width="1"/><path d="M10 2.5L13 4.5L10 6.5Z" stroke="none"/></g></g><g shape-rendering="crispEdges"><rect x="709" y="83" width="1" height="28" fill="#a0a0a0"/><rect x="710" y="83" width="1" height="28" fill="#ffffff"/></g></svg>
<svg style="left:260px;top:61px" width="19" height="15" viewBox="0 -11 19 15"><text x="0.4" y="-0.5" font-family="'Liberation Sans',sans-serif" font-size="10" textLength="16" lengthAdjust="spacingAndGlyphs" fill="#fff">Run</text></svg>
<svg style="left:259px;top:60px" width="19" height="15" viewBox="0 -11 19 15"><text x="0.4" y="-0.5" font-family="'Liberation Sans',sans-serif" font-size="10" textLength="16" lengthAdjust="spacingAndGlyphs" fill="#a0a0a0">Run</text></svg>
<div style="left:8px;top:112px;width:247px;height:608px;background:#f0f0f0;"></div>
<div style="left:8px;top:112px;width:246px;height:1px;background:#f8f8f8;"></div>
<div style="left:250px;top:113px;width:1px;height:606px;background:#fafafa;"></div>
<div style="left:13px;top:117px;width:204px;height:3px;background:#f0f0f0;border-top:1px solid #fff;border-left:1px solid #fff;border-bottom:1px solid #a0a0a0;border-right:1px solid #a0a0a0;"></div><div style="left:13px;top:121px;width:204px;height:3px;background:#f0f0f0;border-top:1px solid #fff;border-left:1px solid #fff;border-bottom:1px solid #a0a0a0;border-right:1px solid #a0a0a0;"></div><div style="left:218px;top:114px;width:12px;height:12px;background:#f0f0f0;border-top:1px solid #fff;border-left:1px solid #fff;border-bottom:1px solid #696969;border-right:1px solid #696969;"><div style="left:0px;top:0px;width:10px;height:10px;border-bottom:1px solid #a0a0a0;border-right:1px solid #a0a0a0;"></div></div><div style="left:232px;top:114px;width:11px;height:12px;background:#f0f0f0;border-top:1px solid #fff;border-left:1px solid #fff;border-bottom:1px solid #696969;border-right:1px solid #696969;"><div style="left:0px;top:0px;width:9px;height:10px;border-bottom:1px solid #a0a0a0;border-right:1px solid #a0a0a0;"></div></div><svg style="left:218px;top:114px" width="26" height="12" viewBox="0 0 26 12" ><path d="M3 7L5.5 4L8 7Z" fill="#000" stroke="#000" stroke-width=".6"/><path d="M16.5 3L21.5 8M21.5 3L16.5 8" stroke="#000" stroke-width="1.8" fill="none"/></svg>
<div style="left:13px;top:128px;width:232px;height:1px;background:#b8b8b8;"></div>
<svg style="left:0;top:0" width="260" height="160" viewBox="0 0 260 160"><g shape-rendering="crispEdges"><rect x="12" y="131" width="2" height="2" fill="#c2c2c2"/><rect x="13" y="132" width="1" height="1" fill="#fff"/><rect x="16" y="133" width="2" height="2" fill="#c2c2c2"/><rect x="17" y="134" width="1" height="1" fill="#fff"/><rect x="12" y="135" width="2" height="2" fill="#c2c2c2"/><rect x="13" y="136" width="1" height="1" fill="#fff"/><rect x="16" y="137" width="2" height="2" fill="#c2c2c2"/><rect x="17" y="138" width="1" height="1" fill="#fff"/><rect x="12" y="139" width="2" height="2" fill="#c2c2c2"/><rect x="13" y="140" width="1" height="1" fill="#fff"/><rect x="16" y="141" width="2" height="2" fill="#c2c2c2"/><rect x="17" y="142" width="1" height="1" fill="#fff"/><rect x="12" y="143" width="2" height="2" fill="#c2c2c2"/><rect x="13" y="144" width="1" height="1" fill="#fff"/><rect x="16" y="145" width="2" height="2" fill="#c2c2c2"/><rect x="17" y="146" width="1" height="1" fill="#fff"/><rect x="12" y="147" width="2" height="2" fill="#c2c2c2"/><rect x="13" y="148" width="1" height="1" fill="#fff"/><rect x="16" y="149" width="2" height="2" fill="#c2c2c2"/><rect x="17" y="150" width="1" height="1" fill="#fff"/><rect x="12" y="151" width="2" height="2" fill="#c2c2c2"/><rect x="13" y="152" width="1" height="1" fill="#fff"/><rect x="16" y="153" width="2" height="2" fill="#c2c2c2"/><rect x="17" y="154" width="1" height="1" fill="#fff"/></g><rect x="20.5" y="131.5" width="22" height="21" rx="2.5" fill="#e4e4e4" stroke="#7a7a7a"/><g transform="translate(24,135)" shape-rendering="crispEdges" ><rect x="5" y="0" width="6" height="1" fill="#000"/><rect x="4" y="1" width="1" height="2" fill="#000"/><rect x="11" y="1" width="1" height="2" fill="#000"/><rect x="0" y="2" width="16" height="1" fill="#000"/><rect x="0" y="3" width="1" height="9" fill="#000"/><rect x="15" y="3" width="1" height="4" fill="#000"/><rect x="14" y="3" width="1" height="9" fill="#000"/><rect x="1" y="12" width="1" height="1" fill="#000"/><rect x="13" y="12" width="1" height="1" fill="#000"/><rect x="2" y="13" width="11" height="1" fill="#000"/><rect x="1" y="3" width="13" height="9" fill="#e0e0e0"/><rect x="2" y="12" width="11" height="1" fill="#e0e0e0"/><rect x="2" y="3" width="10" height="1" fill="#f4f4f4"/><rect x="2" y="4" width="11" height="1" fill="#000"/><rect x="2" y="11" width="11" height="1" fill="#000"/><rect x="2" y="4" width="1" height="8" fill="#000"/><rect x="12" y="4" width="1" height="8" fill="#000"/><pattern id="p3" width="2" height="2" patternUnits="userSpaceOnUse"><rect width="2" height="2" fill="#b4b4b4"/><rect width="1" height="1" fill="#f0f0f0"/><rect x="1" y="1" width="1" height="1" fill="#f0f0f0"/></pattern><rect x="3" y="5" width="9" height="6" fill="url(#p3)"/><rect x="13" y="2" width="1" height="3" fill="#ff0000"/><rect x="12" y="3" width="3" height="1" fill="#ff0000"/><rect x="13" y="5" width="1" height="1" fill="#e8e800"/><rect x="13" y="6" width="1" height="1" fill="#00d000"/></g><g transform="translate(48,134)" shape-rendering="crispEdges" ><path d="M0.5 0.5H8.5L11.5 3.5V14.5H0.5Z" fill="#fff" stroke="#000"/><path d="M8.5 0.5V3.5H11.5" fill="none" stroke="#000"/><rect x="3" y="4" width="5" height="1" fill="#008000"/><rect x="3" y="7" width="6" height="1" fill="#808080"/><rect x="3" y="9" width="6" height="1" fill="#808080"/><rect x="3" y="11" width="6" height="1" fill="#808080"/></g><g shape-rendering="crispEdges"><rect x="70" y="132" width="1" height="22" fill="#a0a0a0"/><rect x="71" y="132" width="1" height="22" fill="#ffffff"/></g><g transform="translate(77,135)"><g transform="translate(1,1)" fill="#ffffff" stroke="#ffffff"><path d="M6 0L10 3.5L6 7V5H2V2H6Z" stroke="none"/><circle cx="3.5" cy="11.5" r="2.2" fill="none"/><circle cx="9.5" cy="11.5" r="2.2" fill="none"/><path d="M10 9L15 5" fill="none" stroke-width="1"/></g><g fill="#a0a0a0" stroke="#a0a0a0"><path d="M6 0L10 3.5L6 7V5H2V2H6Z" stroke="none"/><circle cx="3.5" cy="11.5" r="2.2" fill="none"/><circle cx="9.5" cy="11.5" r="2.2" fill="none"/><path d="M10 9L15 5" fill="none" stroke-width="1"/></g></g><g shape-rendering="crispEdges"><rect x="100" y="132" width="1" height="22" fill="#a0a0a0"/><rect x="101" y="132" width="1" height="22" fill="#ffffff"/></g><g transform="translate(107,135)"><g transform="translate(1,1)" fill="#ffffff" stroke="#ffffff"><rect x="3.5" y="3.5" width="11" height="10" fill="none"/><rect x="5" y="6" width="3" height="3" stroke="none"/><path d="M9 6.5L13 6.5" fill="none" stroke-width="1"/><path d="M9 8.5L13 8.5" fill="none" stroke-width="1"/><path d="M5 11.5L13 11.5" fill="none" stroke-width="1"/><path d="M0 0L6 6M6 0L0 6" fill="none" stroke-width="1.6"/></g><g fill="#a0a0a0" stroke="#a0a0a0"><rect x="3.5" y="3.5" width="11" height="10" fill="none"/><rect x="5" y="6" width="3" height="3" stroke="none"/><path d="M9 6.5L13 6.5" fill="none" stroke-width="1"/><path d="M9 8.5L13 8.5" fill="none" stroke-width="1"/><path d="M5 11.5L13 11.5" fill="none" stroke-width="1"/><path d="M0 0L6 6M6 0L0 6" fill="none" stroke-width="1.6"/></g></g><g shape-rendering="crispEdges"><rect x="131" y="132" width="1" height="22" fill="#a0a0a0"/><rect x="132" y="132" width="1" height="22" fill="#ffffff"/></g><g transform="translate(141,136)"><g transform="translate(1,1)" fill="#ffffff" stroke="#ffffff"><path d="M5.5 0L11 6H7.5V9C7.5 11 6 12 3 12V10C4.5 10 4.5 9.5 4.5 8V6H0Z" stroke="none"/></g><g fill="#a0a0a0" stroke="#a0a0a0"><path d="M5.5 0L11 6H7.5V9C7.5 11 6 12 3 12V10C4.5 10 4.5 9.5 4.5 8V6H0Z" stroke="none"/></g></g><g transform="translate(165,136)"><g transform="translate(1,1)" fill="#ffffff" stroke="#ffffff"><path d="M5.5 12L0 6H3.5V3C3.5 1 5 0 8 0V2C6.5 2 6.5 2.5 6.5 4V6H11Z" stroke="none"/></g><g fill="#a0a0a0" stroke="#a0a0a0"><path d="M5.5 12L0 6H3.5V3C3.5 1 5 0 8 0V2C6.5 2 6.5 2.5 6.5 4V6H11Z" stroke="none"/></g></g></svg>
<div style="left:11px;top:156px;width:234px;height:254px;background:#fff;border:1px solid #e3e3e3;border-top:2px solid #828282;border-left:2px solid #828282;"></div>
<div style="left:8px;top:413px;width:241px;height:1px;background:#fff;"></div>
<div style="left:8px;top:417px;width:241px;height:2px;background:linear-gradient(180deg,#6e6e6e 0,#6e6e6e 70%,#b0b0b0 100%);"></div>
<div style="left:13px;top:166px;width:231px;height:12px;background:linear-gradient(180deg,#fafafa,#efefef);border-bottom:1px solid #e4e4e4"></div>
<svg style="left:0;top:0" width="260" height="260" viewBox="0 0 260 260"><path d="M26 187.5H33" stroke="#a0a0a0" stroke-dasharray="1 1" fill="none" shape-rendering="crispEdges"/><path d="M41.5 195V199" stroke="#a0a0a0" stroke-dasharray="1 1" fill="none" shape-rendering="crispEdges"/><path d="M46 203.5H53" stroke="#a0a0a0" stroke-dasharray="1 1" fill="none" shape-rendering="crispEdges"/><path d="M61.5 211V235" stroke="#a0a0a0" stroke-dasharray="1 1" fill="none" shape-rendering="crispEdges"/><path d="M62 219.5H73" stroke="#a0a0a0" stroke-dasharray="1 1" fill="none" shape-rendering="crispEdges"/><path d="M62 235.5H73" stroke="#a0a0a0" stroke-dasharray="1 1" fill="none" shape-rendering="crispEdges"/><rect x="17.5" y="183.5" width="8" height="8" rx="1" fill="#fafafa" stroke="#919191"/><rect x="19" y="187" width="5" height="1" fill="#2a3c9c"/><rect x="37.5" y="199.5" width="8" height="8" rx="1" fill="#fafafa" stroke="#919191"/><rect x="39" y="203" width="5" height="1" fill="#2a3c9c"/><rect x="33" y="179" width="16" height="16" fill="#c8c8c8"/><rect x="53" y="195" width="16" height="16" fill="#c8c8c8"/><rect x="73" y="211" width="16" height="16" fill="#c8c8c8"/><rect x="73" y="227" width="16" height="16" fill="#c8c8c8"/><g transform="translate(36,180)" shape-rendering="crispEdges" ><path d="M0.5 0.5H6.5L9.5 3.5V12.5H0.5Z" fill="#fff" stroke="#000"/><path d="M6.5 0.5V3.5H9.5" fill="none" stroke="#000"/></g><g transform="translate(53,196)" shape-rendering="crispEdges" ><rect x="5" y="0" width="6" height="1" fill="#000"/><rect x="4" y="1" width="1" height="2" fill="#000"/><rect x="11" y="1" width="1" height="2" fill="#000"/><rect x="0" y="2" width="16" height="1" fill="#000"/><rect x="0" y="3" width="1" height="9" fill="#000"/><rect x="15" y="3" width="1" height="4" fill="#000"/><rect x="14" y="3" width="1" height="9" fill="#000"/><rect x="1" y="12" width="1" height="1" fill="#000"/><rect x="13" y="12" width="1" height="1" fill="#000"/><rect x="2" y="13" width="11" height="1" fill="#000"/><rect x="1" y="3" width="13" height="9" fill="#e0e0e0"/><rect x="2" y="12" width="11" height="1" fill="#e0e0e0"/><rect x="2" y="3" width="10" height="1" fill="#f4f4f4"/><rect x="2" y="4" width="11" height="1" fill="#000"/><rect x="2" y="11" width="11" height="1" fill="#000"/><rect x="2" y="4" width="1" height="8" fill="#000"/><rect x="12" y="4" width="1" height="8" fill="#000"/><pattern id="p4" width="2" height="2" patternUnits="userSpaceOnUse"><rect width="2" height="2" fill="#b4b4b4"/><rect width="1" height="1" fill="#f0f0f0"/><rect x="1" y="1" width="1" height="1" fill="#f0f0f0"/></pattern><rect x="3" y="5" width="9" height="6" fill="url(#p4)"/><rect x="13" y="2" width="1" height="3" fill="#ff0000"/><rect x="12" y="3" width="3" height="1" fill="#ff0000"/><rect x="13" y="5" width="1" height="1" fill="#e8e800"/><rect x="13" y="6" width="1" height="1" fill="#00d000"/></g><g transform="translate(73,211)" shape-rendering="crispEdges" ><rect x="1" y="3" width="13" height="9" fill="#000080"/><rect x="2" y="4" width="11" height="7" fill="#c0c0c0"/><rect x="3" y="5" width="9" height="5" fill="#d8d8d8"/><rect x="0" y="2" width="3" height="2" fill="#000"/><rect x="6" y="2" width="3" height="2" fill="#000"/><rect x="13" y="2" width="3" height="2" fill="#000"/><rect x="0" y="11" width="3" height="2" fill="#000"/><rect x="6" y="11" width="3" height="2" fill="#000"/><rect x="13" y="11" width="3" height="2" fill="#000"/></g><g transform="translate(73,227)" shape-rendering="crispEdges" ><rect x="1" y="3" width="13" height="9" fill="#000080"/><rect x="2" y="4" width="11" height="7" fill="#c0c0c0"/><rect x="3" y="5" width="9" height="5" fill="#d8d8d8"/><rect x="0" y="2" width="3" height="2" fill="#000"/><rect x="6" y="2" width="3" height="2" fill="#000"/><rect x="13" y="2" width="3" height="2" fill="#000"/><rect x="0" y="11" width="3" height="2" fill="#000"/><rect x="6" y="11" width="3" height="2" fill="#000"/><rect x="13" y="11" width="3" height="2" fill="#000"/></g><rect x="92" y="211" width="27" height="16" fill="#e0e0e0"/></svg>
<svg style="left:55.5px;top:179px" width="34" height="16" viewBox="0 -12 34 16"><text x="0.5" y="-0.1" font-family="'Liberation Sans',sans-serif" font-size="12" textLength="30" lengthAdjust="spacingAndGlyphs" fill="#000">Panel1</text></svg>
<svg style="left:75.5px;top:195px" width="28" height="16" viewBox="0 -12 28 16"><text x="0.5" y="-0.1" font-family="'Liberation Sans',sans-serif" font-size="12" textLength="25" lengthAdjust="spacingAndGlyphs" fill="#000">Panel</text></svg>
<svg style="left:95.5px;top:211px" width="21" height="16" viewBox="0 -12 21 16"><text x="0.5" y="-0.1" font-family="'Liberation Sans',sans-serif" font-size="12" textLength="17" lengthAdjust="spacingAndGlyphs" fill="#000">PB1</text></svg>
<svg style="left:95.5px;top:227px" width="21" height="16" viewBox="0 -12 21 16"><text x="0.5" y="-0.1" font-family="'Liberation Sans',sans-serif" font-size="12" textLength="18.5" lengthAdjust="spacingAndGlyphs" fill="#000">PB2</text></svg>
<div style="left:13px;top:425px;width:204px;height:3px;background:#f0f0f0;border-top:1px solid #fff;border-left:1px solid #fff;border-bottom:1px solid #a0a0a0;border-right:1px solid #a0a0a0;"></div><div style="left:13px;top:429px;width:204px;height:3px;background:#f0f0f0;border-top:1px solid #fff;border-left:1px solid #fff;border-bottom:1px solid #a0a0a0;border-right:1px solid #a0a0a0;"></div><div style="left:218px;top:422px;width:12px;height:12px;background:#f0f0f0;border-top:1px solid #fff;border-left:1px solid #fff;border-bottom:1px solid #696969;border-right:1px solid #696969;"><div style="left:0px;top:0px;width:10px;height:10px;border-bottom:1px solid #a0a0a0;border-right:1px solid #a0a0a0;"></div></div><div style="left:232px;top:422px;width:11px;height:12px;background:#f0f0f0;border-top:1px solid #fff;border-left:1px solid #fff;border-bottom:1px solid #696969;border-right:1px solid #696969;"><div style="left:0px;top:0px;width:9px;height:10px;border-bottom:1px solid #a0a0a0;border-right:1px solid #a0a0a0;"></div></div><svg style="left:218px;top:422px" width="26" height="12" viewBox="0 0 26 12" ><path d="M3 7L5.5 4L8 7Z" fill="#000" stroke="#000" stroke-width=".6"/><path d="M16.5 3L21.5 8M21.5 3L16.5 8" stroke="#000" stroke-width="1.8" fill="none"/></svg>
<div style="left:11px;top:437px;width:234px;height:233px;background:#fff;border-left:1px solid #a0a0a0;"></div>
<div style="left:12px;top:436px;width:215px;height:1px;background:#b4b4b4;"></div>
<div style="left:12px;top:438px;width:15px;height:231px;background:#f0f0f0;"></div>
<div style="left:28px;top:438px;width:199px;height:1px;background:#a9a9a9;"></div><div class="t" style="left:32px;top:444px;font-size:12px;letter-spacing:0.2px;">X</div><div style="left:116px;top:440px;width:111px;height:18px;overflow:hidden;"><div class="t" style="left:0px;top:4px;font-size:12px;">160</div></div><div style="left:28px;top:459px;width:199px;height:1px;background:#a9a9a9;"></div><div class="t" style="left:32px;top:465px;font-size:12px;letter-spacing:0.2px;">Y</div><div style="left:116px;top:461px;width:111px;height:18px;overflow:hidden;"><div class="t" style="left:0px;top:4px;font-size:12px;">260</div></div><div style="left:28px;top:480px;width:199px;height:1px;background:#a9a9a9;"></div><div class="t" style="left:32px;top:486px;font-size:12px;letter-spacing:0.2px;">Width</div><div style="left:116px;top:482px;width:111px;height:18px;overflow:hidden;"><div class="t" style="left:0px;top:4px;font-size:12px;">140</div></div><div style="left:28px;top:501px;width:199px;height:1px;background:#a9a9a9;"></div><div class="t" style="left:32px;top:507px;font-size:12px;letter-spacing:0.2px;">Height</div><div style="left:116px;top:503px;width:111px;height:18px;overflow:hidden;"><div class="t" style="left:0px;top:4px;font-size:12px;">50</div></div><div style="left:28px;top:522px;width:199px;height:1px;background:#a9a9a9;"></div><div class="t" style="left:32px;top:528px;font-size:12px;letter-spacing:0.2px;">FG</div><div style="left:28px;top:543px;width:199px;height:1px;background:#a9a9a9;"></div><div class="t" style="left:32px;top:549px;font-size:12px;letter-spacing:0.2px;">BG</div><div style="left:28px;top:564px;width:199px;height:1px;background:#a9a9a9;"></div><div class="t" style="left:32px;top:570px;font-size:12px;letter-spacing:0.2px;">Group</div><div style="left:116px;top:566px;width:111px;height:18px;overflow:hidden;"><div class="t" style="left:0px;top:4px;font-size:12px;">0</div></div><div style="left:28px;top:585px;width:199px;height:1px;background:#a9a9a9;"></div><div class="t" style="left:32px;top:591px;font-size:12px;letter-spacing:0.2px;">Active</div><div style="left:116px;top:587px;width:111px;height:18px;overflow:hidden;"><div class="t" style="left:0px;top:4px;font-size:12px;letter-spacing:0.05px;">3 - Visible and Enable</div></div><div style="left:28px;top:606px;width:199px;height:1px;background:#a9a9a9;"></div><div class="t" style="left:32px;top:612px;font-size:12px;letter-spacing:0.2px;">Style</div><div style="left:116px;top:608px;width:111px;height:18px;overflow:hidden;"><div class="t" style="left:0px;top:4px;font-size:12px;letter-spacing:0.24px;">1 - Rectangle (3D)</div></div><div style="left:27px;top:438px;width:1px;height:231px;background:#a9a9a9;"></div><div style="left:111px;top:438px;width:1px;height:189px;background:#a9a9a9;"></div><div style="left:117px;top:525px;width:15px;height:15px;background:#000;"></div><div class="t" style="left:136px;top:528px;font-size:12px;letter-spacing:0.15px;">RGB (0, 0, 0)</div><div style="left:117px;top:546px;width:15px;height:15px;background:#b0b0b0;"></div><div style="left:136px;top:545px;width:91px;height:18px;overflow:hidden;"><div class="t" style="left:0px;top:4px;font-size:12px;letter-spacing:0.15px;">RGB (176, 176, 176)</div></div><div style="left:28px;top:627px;width:199px;height:1px;background:#a9a9a9;"></div><div style="left:28px;top:628px;width:199px;height:20px;background:#f0f0f0;"></div><div class="t" style="left:32px;top:632px;font-size:12px;font-weight:bold;">Misc.</div><div style="left:15px;top:633px;width:9px;height:9px;border:1px solid #848484;background:#fff;"><div style="left:1px;top:3px;width:5px;height:1px;background:#000;"></div></div><div style="left:28px;top:648px;width:199px;height:1px;background:#a9a9a9;"></div><div style="left:28px;top:649px;width:83px;height:20px;background:#3399ff;"></div><div style="left:111px;top:649px;width:1px;height:20px;background:#a9a9a9;"></div><div class="t" style="left:32px;top:656px;font-size:12px;color:#fff;letter-spacing:0.2px;">Caption</div><div class="t" style="left:117px;top:651px;font-size:12px;">Top Page</div><div style="left:11px;top:669px;width:234px;height:1px;background:#a0a0a0;"></div>
<div style="left:229px;top:438px;width:15px;height:231px;background:#f0f0f0;"></div><div style="left:230px;top:475px;width:14px;height:119px;border:1px solid #9a9a9a;border-radius:2px;background:linear-gradient(90deg,#f6f6f6 0,#e9e9e9 45%,#d6d6d6 55%,#cfcfcf 100%);"></div><svg style="left:229px;top:438px" width="15" height="231" viewBox="0 0 15 231" ><path d="M4.5 9.5L7.5 6L10.5 9.5L7.5 8Z" fill="#505050" stroke="#505050" stroke-width=".8"/><path d="M4 221.5L7.5 225L11 221.5Z" fill="#505050" stroke="#505050"/><path d="M4 93.5H11M4 96.5H11M4 99.5H11" stroke="#707070" fill="none" shape-rendering="crispEdges"/></svg>
<div style="left:11px;top:671px;width:234px;height:49px;border-left:1px solid #a0a0a0;border-bottom:1px solid #808080;"></div>
<div class="t" style="left:15px;top:676px;font-size:12px;font-weight:bold;letter-spacing:0.25px;">Caption</div>
<svg style="left:15px;top:687.5px" width="150" height="18" viewBox="0 -13 150 18"><text x="0.5" y="0" font-family="'Liberation Sans','Noto Sans CJK JP',sans-serif" font-size="11" textLength="147" lengthAdjust="spacingAndGlyphs" fill="#000">コンポーネントに表示される文字</text></svg>
<div style="left:8px;top:719px;width:247px;height:1px;background:#9a9a9a;"></div>
<div style="left:254px;top:112px;width:698px;height:608px;background:#ababab;border-left:2px solid #6c6c6c;border-top:1px solid #696969;border-right:2px solid #fff;border-bottom:1px solid #fff;"></div>
<div style="left:257px;top:113px;width:679px;height:576px;border:1px solid #494e57;border-radius:7px 7px 1px 1px;background:#d7e4f2;"></div>
<div style="left:258px;top:114px;width:677px;height:30px;border-radius:6px 6px 0 0;background:linear-gradient(180deg,#eef3f9 0,#c6d5e6 2px,#c9d8e8 40%,#d6e2f0 100%);"></div>
<div style="left:258px;top:114px;width:677px;height:574px;border:1px solid rgba(255,255,255,.75);border-radius:6px 6px 0 0;"></div>
<svg style="left:266px;top:123px" width="16" height="16" viewBox="0 0 16 16" ><g transform="translate(0,0)" shape-rendering="crispEdges" ><rect x="5" y="0" width="6" height="1" fill="#000"/><rect x="4" y="1" width="1" height="2" fill="#000"/><rect x="11" y="1" width="1" height="2" fill="#000"/><rect x="0" y="2" width="16" height="1" fill="#000"/><rect x="0" y="3" width="1" height="9" fill="#000"/><rect x="15" y="3" width="1" height="4" fill="#000"/><rect x="14" y="3" width="1" height="9" fill="#000"/><rect x="1" y="12" width="1" height="1" fill="#000"/><rect x="13" y="12" width="1" height="1" fill="#000"/><rect x="2" y="13" width="11" height="1" fill="#000"/><rect x="1" y="3" width="13" height="9" fill="#e0e0e0"/><rect x="2" y="12" width="11" height="1" fill="#e0e0e0"/><rect x="2" y="3" width="10" height="1" fill="#f4f4f4"/><rect x="2" y="4" width="11" height="1" fill="#000"/><rect x="2" y="11" width="11" height="1" fill="#000"/><rect x="2" y="4" width="1" height="8" fill="#000"/><rect x="12" y="4" width="1" height="8" fill="#000"/><pattern id="p5" width="2" height="2" patternUnits="userSpaceOnUse"><rect width="2" height="2" fill="#b4b4b4"/><rect width="1" height="1" fill="#f0f0f0"/><rect x="1" y="1" width="1" height="1" fill="#f0f0f0"/></pattern><rect x="3" y="5" width="9" height="6" fill="url(#p5)"/><rect x="13" y="2" width="1" height="3" fill="#ff0000"/><rect x="12" y="3" width="3" height="1" fill="#ff0000"/><rect x="13" y="5" width="1" height="1" fill="#e8e800"/><rect x="13" y="6" width="1" height="1" fill="#00d000"/></g></svg>
<div class="t" style="left:287px;top:125px;font-size:13px;color:#7f7f7f;">Layout - Panel1</div>
<div style="left:829px;top:123px;width:31px;height:17px;border:1px solid #8493ad;border-radius:3px;background:linear-gradient(180deg,#d6e1ee 0,#cbd8e8 45%,#bfcee1 50%,#cad7e7 100%);box-shadow:inset 0 0 0 1px rgba(255,255,255,.5);"></div><svg style="left:829px;top:123px" width="31" height="17" viewBox="0 0 31 17" ><rect x="10.0" y="8.5" width="11" height="3.6" rx="1" fill="#ececec" stroke="#596273" stroke-width="1.1"/></svg><div style="left:862px;top:123px;width:31px;height:17px;border:1px solid #8493ad;border-radius:3px;background:linear-gradient(180deg,#d6e1ee 0,#cbd8e8 45%,#bfcee1 50%,#cad7e7 100%);box-shadow:inset 0 0 0 1px rgba(255,255,255,.5);"></div><svg style="left:862px;top:123px" width="31" height="17" viewBox="0 0 31 17" ><rect x="10.0" y="4.3" width="11" height="8.2" rx="1.2" fill="#ececec" stroke="#596273" stroke-width="1.1"/><rect x="13.3" y="7.4" width="4.4" height="2.2" fill="#a9b7cc" stroke="#596273" stroke-width="1"/></svg><div style="left:895px;top:123px;width:31px;height:17px;border:1px solid #8493ad;border-radius:3px;background:linear-gradient(180deg,#d6e1ee 0,#cbd8e8 45%,#bfcee1 50%,#cad7e7 100%);box-shadow:inset 0 0 0 1px rgba(255,255,255,.5);"></div><svg style="left:895px;top:123px" width="31" height="17" viewBox="0 0 31 17" ><path d="M9.9 4.2H13.5L15.5 6.6L17.5 4.2H21.1L17.6 8.5L21.1 12.8H17.5L15.5 10.4L13.5 12.8H9.9L13.4 8.5Z" fill="#ececec" stroke="#596273" stroke-width="1.1" stroke-linejoin="round"/></svg>
<div style="left:264px;top:142px;width:664px;height:539px;background:#f0f0f0;border:1px solid #fff;border-top-color:#c7d3e0;border-left-color:#c7d3e0"></div>
<svg style="left:265px;top:143px" width="20" height="30" viewBox="0 0 20 30" ><g shape-rendering="crispEdges"><rect x="2" y="3" width="2" height="2" fill="#c2c2c2"/><rect x="3" y="4" width="1" height="1" fill="#fff"/><rect x="6" y="5" width="2" height="2" fill="#c2c2c2"/><rect x="7" y="6" width="1" height="1" fill="#fff"/><rect x="2" y="7" width="2" height="2" fill="#c2c2c2"/><rect x="3" y="8" width="1" height="1" fill="#fff"/><rect x="6" y="9" width="2" height="2" fill="#c2c2c2"/><rect x="7" y="10" width="1" height="1" fill="#fff"/><rect x="2" y="11" width="2" height="2" fill="#c2c2c2"/><rect x="3" y="12" width="1" height="1" fill="#fff"/><rect x="6" y="13" width="2" height="2" fill="#c2c2c2"/><rect x="7" y="14" width="1" height="1" fill="#fff"/><rect x="2" y="15" width="2" height="2" fill="#c2c2c2"/><rect x="3" y="16" width="1" height="1" fill="#fff"/><rect x="6" y="17" width="2" height="2" fill="#c2c2c2"/><rect x="7" y="18" width="1" height="1" fill="#fff"/><rect x="2" y="19" width="2" height="2" fill="#c2c2c2"/><rect x="3" y="20" width="1" height="1" fill="#fff"/><rect x="6" y="21" width="2" height="2" fill="#c2c2c2"/><rect x="7" y="22" width="1" height="1" fill="#fff"/><rect x="2" y="23" width="2" height="2" fill="#c2c2c2"/><rect x="3" y="24" width="1" height="1" fill="#fff"/><rect x="6" y="25" width="2" height="2" fill="#c2c2c2"/><rect x="7" y="26" width="1" height="1" fill="#fff"/></g><rect x="12.5" y="8.5" width="8" height="11" fill="#fff" stroke="#808080"/><rect x="14" y="11" width="3" height="1" fill="#008000"/><rect x="14" y="14" width="5" height="1" fill="#808080"/></svg>
<div style="left:283px;top:192px;width:640px;height:485px;background:#646464;"></div>
<div style="left:923px;top:192px;width:3px;height:487px;background:#808080;"></div>
<div style="left:283px;top:677px;width:643px;height:2px;background:#808080;"></div>
<div style="left:283px;top:241px;width:640px;height:365px;background-color:#3b4c76;background-image:radial-gradient(circle at 0.5px 0.5px,#e6cf9b 0,#e6cf9b 0.55px,rgba(230,207,155,0) 0.9px);background-size:10px 10px;background-position:0 0;"></div>
<svg style="left:0;top:0" width="960" height="700" viewBox="0 0 960 700"><rect x="265" y="173" width="661" height="19" fill="#c0c0c0"/><rect x="266" y="173" width="18" height="506" fill="#c0c0c0"/><rect x="265" y="172" width="661" height="1" fill="#8a8a8a"/><rect x="265" y="173" width="661" height="2" fill="#181818"/><rect x="283" y="191" width="643" height="1" fill="#303030"/><rect x="265" y="172" width="1" height="507" fill="#8a8a8a"/><rect x="266" y="172" width="1.5" height="507" fill="#181818"/><rect x="283" y="172" width="1.2" height="507" fill="#202020"/><rect x="266" y="191" width="18" height="1" fill="#303030"/><path d="M283.5 175V191M293.5 189V191M303.5 188V191M313.5 189V191M323.5 184V191M333.5 189V191M343.5 188V191M353.5 189V191M363.5 175V191M373.5 189V191M383.5 188V191M393.5 189V191M403.5 184V191M413.5 189V191M423.5 188V191M433.5 189V191M443.5 175V191M453.5 189V191M463.5 188V191M473.5 189V191M483.5 184V191M493.5 189V191M503.5 188V191M513.5 189V191M523.5 175V191M533.5 189V191M543.5 188V191M553.5 189V191M563.5 184V191M573.5 189V191M583.5 188V191M593.5 189V191M603.5 175V191M613.5 189V191M623.5 188V191M633.5 189V191M643.5 184V191M653.5 189V191M663.5 188V191M673.5 189V191M683.5 175V191M693.5 189V191M703.5 188V191M713.5 189V191M723.5 184V191M733.5 189V191M743.5 188V191M753.5 189V191M763.5 175V191M773.5 189V191M783.5 188V191M793.5 189V191M803.5 184V191M813.5 189V191M823.5 188V191M833.5 189V191M843.5 175V191M853.5 189V191M863.5 188V191M873.5 189V191M883.5 184V191M893.5 189V191M903.5 188V191M913.5 189V191M923.5 175V191M912.5 175V191M925.5 175V191M277 201.5H283M282 211.5H283M280 221.5H283M282 231.5H283M267 241.5H283M282 251.5H283M280 261.5H283M282 271.5H283M277 281.5H283M282 291.5H283M280 301.5H283M282 311.5H283M267 321.5H283M282 331.5H283M280 341.5H283M282 351.5H283M277 361.5H283M282 371.5H283M280 381.5H283M282 391.5H283M267 401.5H283M282 411.5H283M280 421.5H283M282 431.5H283M277 441.5H283M282 451.5H283M280 461.5H283M282 471.5H283M267 481.5H283M282 491.5H283M280 501.5H283M282 511.5H283M277 521.5H283M282 531.5H283M280 541.5H283M282 551.5H283M267 561.5H283M282 571.5H283M280 581.5H283M282 591.5H283M277 601.5H283M282 611.5H283M280 621.5H283M282 631.5H283M267 641.5H283M282 651.5H283M280 661.5H283M282 671.5H283M267 524.5H283" stroke="#202020" fill="none" shape-rendering="crispEdges"/><g font-family="Liberation Sans" font-size="10" fill="#101010"><text x="286" y="183.5">0</text><text x="326" y="183.5">40</text><text x="366" y="183.5">80</text><text x="406" y="183.5">120</text><text x="446" y="183.5">160</text><text x="486" y="183.5">200</text><text x="526" y="183.5">240</text><text x="566" y="183.5">280</text><text x="606" y="183.5">320</text><text x="646" y="183.5">360</text><text x="686" y="183.5">400</text><text x="726" y="183.5">440</text><text x="766" y="183.5">480</text><text x="806" y="183.5">520</text><text x="846" y="183.5">560</text><text x="886" y="183.5">600</text><text transform="translate(276.5,205) rotate(-90)" text-anchor="end">-40</text><text transform="translate(276.5,245) rotate(-90)" text-anchor="end">0</text><text transform="translate(276.5,285) rotate(-90)" text-anchor="end">40</text><text transform="translate(276.5,325) rotate(-90)" text-anchor="end">80</text><text transform="translate(276.5,365) rotate(-90)" text-anchor="end">120</text><text transform="translate(276.5,405) rotate(-90)" text-anchor="end">160</text><text transform="translate(276.5,445) rotate(-90)" text-anchor="end">200</text><text transform="translate(276.5,485) rotate(-90)" text-anchor="end">240</text><text transform="translate(276.5,525) rotate(-90)" text-anchor="end">280</text><text transform="translate(276.5,565) rotate(-90)" text-anchor="end">320</text><text transform="translate(276.5,605) rotate(-90)" text-anchor="end">360</text><text transform="translate(276.5,645) rotate(-90)" text-anchor="end">400</text></g></svg>
<div style="left:715px;top:202px;width:90px;height:35px;border:1px solid #0c3c78;border-radius:4px;background:linear-gradient(180deg,#fbfbfb 0,#ececec 40%,#d6d6d8 75%,#c6c6c9 100%);box-shadow:inset 1px 1px 0 #fff,inset -1px -1px 0 #efefef;"></div>
<svg style="left:853px;top:208px" width="23" height="19" viewBox="0 -14 23 19"><text x="0" y="-0.7" font-family="'Liberation Sans',sans-serif" font-size="14" textLength="21" lengthAdjust="spacingAndGlyphs" fill="#fff" xml:space="preserve">1 %</text></svg>
<div style="left:812px;top:226px;width:104px;height:9px;background:#e8e8f0;"></div>
<div style="left:813px;top:227px;width:1px;height:7px;background:#3c8cf0;"></div>
<div style="left:443px;top:501px;width:141px;height:51px;background:#b0b0b0;border-top:2px solid #fff;border-left:2px solid #fff;border-right:2px solid #101010;border-bottom:2px solid #101010;"></div><div style="left:443px;top:501px;width:141px;height:51px;display:flex;align-items:center;justify-content:center;"><span style="font-size:14.5px;letter-spacing:0.15px;color:#111;white-space:nowrap;position:relative;top:-1px">Top Page</span></div>
<div style="left:633px;top:501px;width:151px;height:51px;background:#b0b0b0;border-top:2px solid #fff;border-left:2px solid #fff;border-right:2px solid #101010;border-bottom:2px solid #101010;"></div><div style="left:633px;top:501px;width:151px;height:51px;display:flex;align-items:center;justify-content:center;"><span style="font-size:14.5px;letter-spacing:0.45px;color:#111;white-space:nowrap;position:relative;top:-1px">Panel1 (Folder1)</span></div>
<svg class="ce" style="left:0;top:0" width="960" height="700" viewBox="0 0 960 700" shape-rendering="crispEdges"><rect x="440.5" y="498.5" width="6" height="6" fill="#000" stroke="#fff"/><rect x="440.5" y="523.5" width="6" height="6" fill="#000" stroke="#fff"/><rect x="440.5" y="548.5" width="6" height="6" fill="#000" stroke="#fff"/><rect x="510.5" y="498.5" width="6" height="6" fill="#000" stroke="#fff"/><rect x="510.5" y="548.5" width="6" height="6" fill="#000" stroke="#fff"/><rect x="580.5" y="498.5" width="6" height="6" fill="#000" stroke="#fff"/><rect x="580.5" y="523.5" width="6" height="6" fill="#000" stroke="#fff"/><rect x="580.5" y="548.5" width="6" height="6" fill="#000" stroke="#fff"/></svg>
<div style="left:834px;top:610px;width:86px;height:24px;border:1px solid #0c3c78;border-radius:12px;background:linear-gradient(180deg,#ffffff 0,#f0f0f8 45%,#dcdcec 100%);"></div>
<svg style="left:845px;top:617px" width="12" height="12" viewBox="0 0 12 12" ><rect x="0.5" y="0.5" width="10" height="10" fill="#f4f4f4" stroke="#808080"/><path d="M2.5 8.5L6 5M4 3H8V7Z" stroke="#606060" stroke-width="1.4" fill="#606060"/></svg>
<div class="t" style="left:861px;top:616px;font-size:12px;">Shotcut</div>
<div style="left:286px;top:638px;width:82px;height:36px;border:1px solid #0c3c78;border-radius:4px;background:linear-gradient(180deg,#fbfbfb 0,#ececec 40%,#d6d6d8 75%,#c6c6c9 100%);box-shadow:inset 1px 1px 0 #fff,inset -1px -1px 0 #efefef;"></div>
<div style="left:372px;top:638px;width:90px;height:36px;border:1px solid #0c3c78;border-radius:4px;background:linear-gradient(180deg,#fbfbfb 0,#ececec 40%,#d6d6d8 75%,#c6c6c9 100%);box-shadow:inset 1px 1px 0 #fff,inset -1px -1px 0 #efefef;"></div>
<div style="left:464px;top:638px;width:90px;height:36px;border:1px solid #0c3c78;border-radius:4px;background:linear-gradient(180deg,#fbfbfb 0,#ececec 40%,#d6d6d8 75%,#c6c6c9 100%);box-shadow:inset 1px 1px 0 #fff,inset -1px -1px 0 #efefef;"></div>
<div style="left:556px;top:638px;width:90px;height:36px;border:1px solid #0c3c78;border-radius:4px;background:linear-gradient(180deg,#fbfbfb 0,#ececec 40%,#d6d6d8 75%,#c6c6c9 100%);box-shadow:inset 1px 1px 0 #fff,inset -1px -1px 0 #efefef;"></div>
<div style="left:648px;top:638px;width:90px;height:36px;border:1px solid #0c3c78;border-radius:4px;background:linear-gradient(180deg,#fbfbfb 0,#ececec 40%,#d6d6d8 75%,#c6c6c9 100%);box-shadow:inset 1px 1px 0 #fff,inset -1px -1px 0 #efefef;"></div>
<div style="left:740px;top:638px;width:90px;height:36px;border:1px solid #0c3c78;border-radius:4px;background:linear-gradient(180deg,#fbfbfb 0,#ececec 40%,#d6d6d8 75%,#c6c6c9 100%);box-shadow:inset 1px 1px 0 #fff,inset -1px -1px 0 #efefef;"></div>
<div style="left:832px;top:638px;width:90px;height:36px;border:1px solid #0c3c78;border-radius:4px;background:linear-gradient(180deg,#fbfbfb 0,#ececec 40%,#d6d6d8 75%,#c6c6c9 100%);box-shadow:inset 1px 1px 0 #fff,inset -1px -1px 0 #efefef;"></div>
<div style="left:322px;top:644px;width:10px;height:10px;border-radius:5px;background:radial-gradient(circle at 40% 35%,#a8a8a8 0,#7c7c7c 55%,#5c5c5c 100%);"></div>
<svg style="left:309px;top:655px" width="36" height="17" viewBox="0 -13 36 17"><text x="0.5" y="-0.6" font-family="'Liberation Sans',sans-serif" font-size="12" textLength="33" lengthAdjust="spacingAndGlyphs" fill="#111">SHIFT</text></svg>
<div style="left:282px;top:139px;width:493px;height:269px;border:1px solid #1d1d1d;border-left-color:rgba(40,40,40,.35);border-radius:7px 7px 1px 1px;background:#b9d1ea;"></div>
<div style="left:283px;top:140px;width:491px;height:29px;border-radius:6px 6px 0 0;background:linear-gradient(180deg,#eaf1f9 0,#bdd0e8 2px,#a6bfe0 35%,#b1c8e5 70%,#bacfe9 100%);"></div>
<div style="left:283px;top:140px;width:220px;height:29px;border-radius:6px 0 0 0;background:linear-gradient(90deg,rgba(235,242,250,.55) 0,rgba(235,242,250,.4) 55%,rgba(235,242,250,0) 100%);"></div>
<div style="left:283px;top:140px;width:491px;height:267px;border-radius:6px 6px 0 0;border-top:1px solid rgba(255,255,255,.8);border-left:1px solid rgba(255,255,255,.8);border-right:1px solid #3fd2fb;border-bottom:1px solid #3fd2fb;"></div>
<svg style="left:292px;top:148px" width="14" height="16" viewBox="0 0 14 16" ><g transform="translate(0,0)" shape-rendering="crispEdges" ><path d="M0.5 0.5H9.5L12.5 3.5V15.5H0.5Z" fill="#fff" stroke="#808080"/><path d="M9.5 0.5V3.5H12.5" fill="none" stroke="#808080"/><rect x="3" y="5" width="6" height="1" fill="#00a000"/><rect x="3" y="8" width="6" height="1" fill="#909090"/><rect x="9" y="5" width="1" height="1" fill="#909090"/></g></svg>
<div class="t" style="left:311px;top:150px;font-size:12.5px;color:#000;">Source - Panel1</div>
<div style="left:668px;top:148px;width:31px;height:17px;border:1px solid #566a86;border-radius:3px;background:linear-gradient(180deg,#cbdaee 0,#b4c9e6 45%,#96b2da 50%,#a9c2e4 100%);box-shadow:inset 0 0 0 1px rgba(255,255,255,.5);"></div><svg style="left:668px;top:148px" width="31" height="17" viewBox="0 0 31 17" ><rect x="10.0" y="8.5" width="11" height="3.6" rx="1" fill="#ffffff" stroke="#3f4858" stroke-width="1.1"/></svg><div style="left:701px;top:148px;width:31px;height:17px;border:1px solid #566a86;border-radius:3px;background:linear-gradient(180deg,#cbdaee 0,#b4c9e6 45%,#96b2da 50%,#a9c2e4 100%);box-shadow:inset 0 0 0 1px rgba(255,255,255,.5);"></div><svg style="left:701px;top:148px" width="31" height="17" viewBox="0 0 31 17" ><rect x="10.0" y="4.3" width="11" height="8.2" rx="1.2" fill="#ffffff" stroke="#3f4858" stroke-width="1.1"/><rect x="13.3" y="7.4" width="4.4" height="2.2" fill="#a9b7cc" stroke="#3f4858" stroke-width="1"/></svg><div style="left:734px;top:148px;width:31px;height:17px;border:1px solid #5e2a24;border-radius:3px;background:linear-gradient(180deg,#e9a99a 0,#d97f70 45%,#c4402a 50%,#cf5b3f 85%,#dc8462 100%);box-shadow:inset 0 0 0 1px rgba(255,255,255,.5);"></div><svg style="left:734px;top:148px" width="31" height="17" viewBox="0 0 31 17" ><path d="M9.9 4.2H13.5L15.5 6.6L17.5 4.2H21.1L17.6 8.5L21.1 12.8H17.5L15.5 10.4L13.5 12.8H9.9L13.4 8.5Z" fill="#ffffff" stroke="#3f4858" stroke-width="1.1" stroke-linejoin="round"/></svg>
<div style="left:289px;top:168px;width:479px;height:232px;background:#f0f0f0;border:1px solid #fff;border-top-color:#8b9bb0;border-left-color:#8b9bb0;"></div>
<svg style="left:0;top:0" width="960" height="210" viewBox="0 0 960 210"><g shape-rendering="crispEdges"><rect x="292" y="172" width="2" height="2" fill="#c2c2c2"/><rect x="293" y="173" width="1" height="1" fill="#fff"/><rect x="296" y="174" width="2" height="2" fill="#c2c2c2"/><rect x="297" y="175" width="1" height="1" fill="#fff"/><rect x="292" y="176" width="2" height="2" fill="#c2c2c2"/><rect x="293" y="177" width="1" height="1" fill="#fff"/><rect x="296" y="178" width="2" height="2" fill="#c2c2c2"/><rect x="297" y="179" width="1" height="1" fill="#fff"/><rect x="292" y="180" width="2" height="2" fill="#c2c2c2"/><rect x="293" y="181" width="1" height="1" fill="#fff"/><rect x="296" y="182" width="2" height="2" fill="#c2c2c2"/><rect x="297" y="183" width="1" height="1" fill="#fff"/><rect x="292" y="184" width="2" height="2" fill="#c2c2c2"/><rect x="293" y="185" width="1" height="1" fill="#fff"/><rect x="296" y="186" width="2" height="2" fill="#c2c2c2"/><rect x="297" y="187" width="1" height="1" fill="#fff"/><rect x="292" y="188" width="2" height="2" fill="#c2c2c2"/><rect x="293" y="189" width="1" height="1" fill="#fff"/><rect x="296" y="190" width="2" height="2" fill="#c2c2c2"/><rect x="297" y="191" width="1" height="1" fill="#fff"/><rect x="292" y="192" width="2" height="2" fill="#c2c2c2"/><rect x="293" y="193" width="1" height="1" fill="#fff"/><rect x="296" y="194" width="2" height="2" fill="#c2c2c2"/><rect x="297" y="195" width="1" height="1" fill="#fff"/></g><g transform="translate(301,175)" shape-rendering="crispEdges" ><rect x="5" y="0" width="6" height="1" fill="#000"/><rect x="4" y="1" width="1" height="2" fill="#000"/><rect x="11" y="1" width="1" height="2" fill="#000"/><rect x="0" y="2" width="16" height="1" fill="#000"/><rect x="0" y="3" width="1" height="9" fill="#000"/><rect x="15" y="3" width="1" height="4" fill="#000"/><rect x="14" y="3" width="1" height="9" fill="#000"/><rect x="1" y="12" width="1" height="1" fill="#000"/><rect x="13" y="12" width="1" height="1" fill="#000"/><rect x="2" y="13" width="11" height="1" fill="#000"/><rect x="1" y="3" width="13" height="9" fill="#e0e0e0"/><rect x="2" y="12" width="11" height="1" fill="#e0e0e0"/><rect x="2" y="3" width="10" height="1" fill="#f4f4f4"/><rect x="2" y="4" width="11" height="1" fill="#000"/><rect x="2" y="11" width="11" height="1" fill="#000"/><rect x="2" y="4" width="1" height="8" fill="#000"/><rect x="12" y="4" width="1" height="8" fill="#000"/><rect x="3" y="5" width="9" height="6" fill="#fff"/><rect x="13" y="2" width="1" height="3" fill="#ff0000"/><rect x="12" y="3" width="3" height="1" fill="#ff0000"/><rect x="13" y="5" width="1" height="1" fill="#e8e800"/><rect x="13" y="6" width="1" height="1" fill="#00d000"/></g><g shape-rendering="crispEdges"><rect x="325" y="172" width="1" height="24" fill="#a0a0a0"/><rect x="326" y="172" width="1" height="24" fill="#ffffff"/></g><g shape-rendering="crispEdges"><rect x="533" y="172" width="1" height="24" fill="#a0a0a0"/><rect x="534" y="172" width="1" height="24" fill="#ffffff"/></g><g shape-rendering="crispEdges"><rect x="741" y="172" width="1" height="24" fill="#a0a0a0"/><rect x="742" y="172" width="1" height="24" fill="#ffffff"/></g><g transform="translate(748,175)" shape-rendering="crispEdges" ><g transform="translate(1,1)" fill="#ffffff" stroke="#ffffff"><path d="M0 5.5H5" fill="none" stroke-width="1"/><path d="M3.5 3.5L6 5.5L3.5 7.5Z" stroke="none"/><rect x="7" y="2" width="8" height="1" stroke="none"/><rect x="7" y="4" width="6" height="1" stroke="none"/><rect x="7" y="6" width="8" height="1" stroke="none"/><rect x="7" y="8" width="6" height="1" stroke="none"/><rect x="1" y="10" width="14" height="1" stroke="none"/><path d="M7.5 0V13" fill="none" stroke-dasharray="1 1"/></g><g fill="#a0a0a0" stroke="#a0a0a0"><path d="M0 5.5H5" fill="none" stroke-width="1"/><path d="M3.5 3.5L6 5.5L3.5 7.5Z" stroke="none"/><rect x="7" y="2" width="8" height="1" stroke="none"/><rect x="7" y="4" width="6" height="1" stroke="none"/><rect x="7" y="6" width="8" height="1" stroke="none"/><rect x="7" y="8" width="6" height="1" stroke="none"/><rect x="1" y="10" width="14" height="1" stroke="none"/><path d="M7.5 0V13" fill="none" stroke-dasharray="1 1"/></g></g></svg>
<div style="left:329px;top:170px;width:200px;height:26px;border:1px solid #707070;border-radius:3px;background:linear-gradient(180deg,#f2f2f2 0,#ebebeb 48%,#dddddd 52%,#cfcfcf 100%);box-shadow:inset 0 0 0 1px rgba(255,255,255,.7);"></div>
<svg style="left:517px;top:182px" width="8" height="5" viewBox="0 0 8 5" ><path d="M0 0H7L3.5 4Z" fill="#000"/></svg>
<div style="left:537px;top:170px;width:200px;height:26px;border:1px solid #707070;border-radius:3px;background:linear-gradient(180deg,#f2f2f2 0,#ebebeb 48%,#dddddd 52%,#cfcfcf 100%);box-shadow:inset 0 0 0 1px rgba(255,255,255,.7);"></div>
<svg style="left:725px;top:182px" width="8" height="5" viewBox="0 0 8 5" ><path d="M0 0H7L3.5 4Z" fill="#000"/></svg>
<svg style="left:333px;top:173px" width="24" height="22" viewBox="0 -16 24 22"><text x="0.3" y="-0.2" font-family="'Liberation Mono',monospace" font-size="15" textLength="24" lengthAdjust="spacingAndGlyphs" fill="#000">PB1</text></svg>
<svg style="left:541.5px;top:173px" width="62" height="22" viewBox="0 -16 62 22"><text x="0.3" y="-0.2" font-family="'Liberation Mono',monospace" font-size="15" textLength="59" lengthAdjust="spacingAndGlyphs" fill="#000">CLICKED</text></svg>
<div style="left:290px;top:197px;width:477px;height:185px;background:#fff;border-top:2px solid #6a6a6a;border-left:1px solid #6a6a6a;"></div>
<div style="left:291px;top:199px;width:60px;height:183px;background:#f0f0f0;"></div>
<svg style="left:0;top:0" width="960" height="400" viewBox="0 0 960 400"><g font-family="'Liberation Mono',monospace" font-size="13.33" fill="#000000"><text y="213.2"><tspan x="352" fill="#ff0000">#</tspan><tspan x="360" fill="#0000ff">include</tspan><tspan x="424" fill="#ff0000">&lt;</tspan><tspan x="432">PanelMain.h</tspan><tspan x="520" fill="#ff0000">&gt;</tspan><tspan x="536">raw</tspan></text><text y="249.2"><tspan x="352" fill="#0000ff">Sub</tspan><tspan x="384">PB1_CLICKED()</tspan></text><text y="267.2"><tspan x="384" fill="#0000ff">PageChange</tspan><tspan x="472">..</tspan><tspan x="488" fill="#ff0000">¥</tspan><tspan x="496">..</tspan><tspan x="512" fill="#ff0000">¥</tspan><tspan x="520">Main</tspan></text><text y="285.2" fill="#0000ff"><tspan x="352">End</tspan><tspan x="384">Sub</tspan></text><text y="321.2"><tspan x="352" fill="#0000ff">Sub</tspan><tspan x="384">PB2_CLICKED()</tspan></text><text y="339.2"><tspan x="384" fill="#0000ff">PageChange</tspan><tspan x="472">..</tspan><tspan x="488" fill="#ff0000">¥</tspan><tspan x="496">Panel1</tspan></text><text y="357.2" fill="#0000ff"><tspan x="352">End</tspan><tspan x="384">Sub</tspan></text></g><g font-family="Liberation Sans" font-size="10.4" fill="#1f6fd8" stroke="#1f6fd8" stroke-width=".15"><text x="340.6" y="211.6" text-anchor="end">00001</text><text x="340.6" y="229.6" text-anchor="end">00002</text><text x="340.6" y="247.6" text-anchor="end">00003</text><text x="340.6" y="265.6" text-anchor="end">00004</text><text x="340.6" y="283.6" text-anchor="end">00005</text><text x="340.6" y="301.6" text-anchor="end">00006</text><text x="340.6" y="319.6" text-anchor="end">00007</text><text x="340.6" y="337.6" text-anchor="end">00008</text><text x="340.6" y="355.6" text-anchor="end">00009</text><text x="340.6" y="373.6" text-anchor="end">00010</text></g></svg>
<div style="left:750px;top:199px;width:17px;height:183px;background:#f0f0f0;border-left:1px solid #e6e6e6"></div>
<div style="left:291px;top:382px;width:476px;height:17px;background:#f0f0f0;border-top:1px solid #e6e6e6"></div>
<svg style="left:750px;top:199px" width="17" height="200" viewBox="0 0 17 200" ><path d="M5 9.5L8.5 6L12 9.5Z" fill="#a6a6a6" stroke="#a6a6a6" stroke-width=".6"/><path d="M5 172.5L8.5 176L12 172.5Z" fill="#a6a6a6" stroke="#a6a6a6" stroke-width=".6"/></svg>
<svg style="left:291px;top:382px" width="476" height="17" viewBox="0 0 476 17" ><path d="M10 4.5V12.5L6 8.5Z" fill="#404040"/><path d="M454 4.5V12.5L458 8.5Z" fill="#404040"/><rect x="18.5" y="1.5" width="14" height="14" rx="2" fill="#e6e6e6" stroke="#979797"/><rect x="19.5" y="2.5" width="12" height="6" rx="1" fill="#f4f4f4"/></svg>
<svg style="left:750px;top:382px" width="17" height="17" viewBox="0 0 17 17" ><rect x="10" y="12" width="1.4" height="1.4" fill="#b0b0b0"/><rect x="12" y="10" width="1.4" height="1.4" fill="#b0b0b0"/><rect x="12" y="12" width="1.4" height="1.4" fill="#b0b0b0"/><rect x="8" y="12" width="1.4" height="1.4" fill="#b0b0b0"/><rect x="12" y="8" width="1.4" height="1.4" fill="#b0b0b0"/><rect x="10" y="10" width="1.4" height="1.4" fill="#b0b0b0"/></svg>
<div style="left:8px;top:720px;width:944px;height:20px;background:#f1edec;border-top:2px solid #fff;border-bottom:1px solid #fff;"></div>
<svg style="left:9.5px;top:723px" width="28" height="18" viewBox="0 -13 28 18"><text x="0.8" y="0" font-family="'Liberation Sans','Noto Sans CJK JP',sans-serif" font-size="12" fill="#000">ﾚﾃﾞｨ</text></svg>
<div style="left:716px;top:722px;width:1px;height:17px;background:#d5d0cf;"></div>
<div style="left:765px;top:722px;width:1px;height:17px;background:#d5d0cf;"></div>
<div style="left:784px;top:722px;width:1px;height:17px;background:#d5d0cf;"></div>
<div style="left:815px;top:722px;width:1px;height:17px;background:#d5d0cf;"></div>
<div style="left:851px;top:722px;width:1px;height:17px;background:#d5d0cf;"></div>
<div style="left:890px;top:722px;width:1px;height:17px;background:#d5d0cf;"></div>
<div style="left:932px;top:722px;width:1px;height:17px;background:#d5d0cf;"></div>
<div style="left:672px;top:722px;width:45px;height:17px;overflow:hidden;"><div class="t" style="left:1px;top:3px;font-size:12px;">X:</div><div class="t" style="left:26px;top:3px;font-size:12px;">629</div></div>
<div style="left:720px;top:722px;width:45px;height:17px;overflow:hidden;"><div class="t" style="left:1px;top:3px;font-size:12px;">Y:</div><div class="t" style="left:26px;top:3px;font-size:12px;">283</div></div>
<div class="t" style="left:895px;top:725px;font-size:12px;">RC8</div>
<svg style="left:938px;top:725px" width="14" height="14" viewBox="0 0 14 14" ><rect x="10" y="11" width="2" height="2" fill="#b8b4b3"/><rect x="10" y="8" width="2" height="2" fill="#b8b4b3"/><rect x="10" y="5" width="2" height="2" fill="#b8b4b3"/><rect x="7" y="11" width="2" height="2" fill="#b8b4b3"/><rect x="7" y="8" width="2" height="2" fill="#b8b4b3"/><rect x="4" y="11" width="2" height="2" fill="#b8b4b3"/></svg>
</body></html>
